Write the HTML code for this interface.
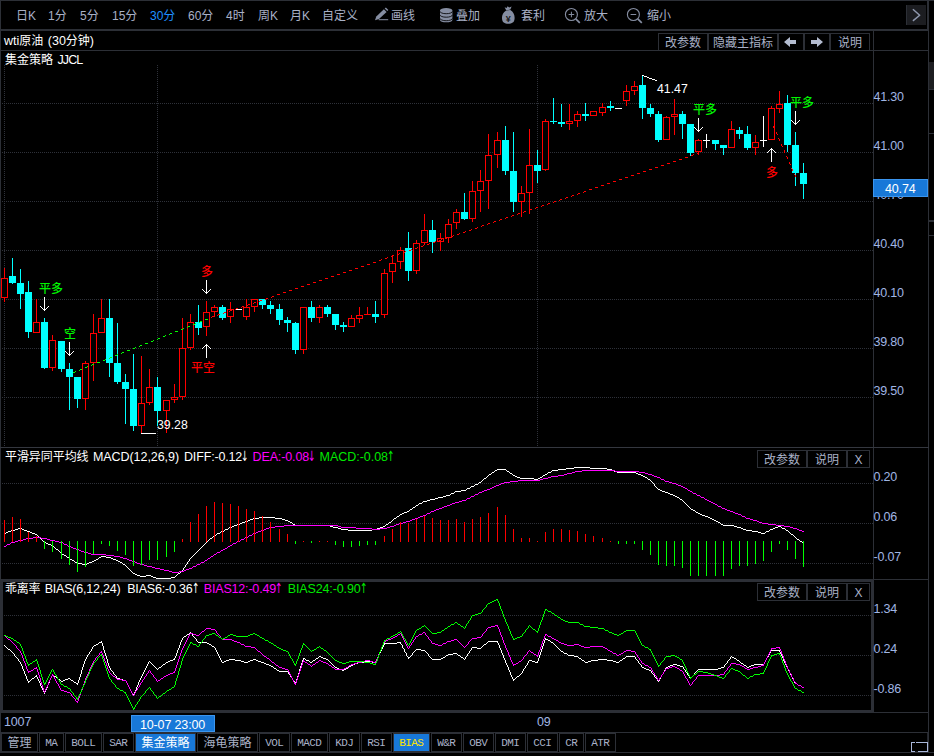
<!DOCTYPE html><html><head><meta charset="utf-8"><title>wti</title><style>
html,body{margin:0;padding:0;background:#000}
#app{position:relative;width:934px;height:756px;overflow:hidden;background:#000;font-family:"Liberation Sans","Noto Sans CJK SC",sans-serif}
#app>div,#app>svg{position:absolute}
.t{white-space:nowrap;color:#fff;line-height:16px}
.tb{font-size:12px;font-weight:400;color:#a9b1c7;line-height:16px}
.tb.sel{color:#1e90ff}
.ya{word-spacing:1px;font-size:12.5px;line-height:18px;color:#fff}
.ax{letter-spacing:-0.15px;font-size:12.5px;line-height:16px;color:#a0b6e4}
.ar{font-family:"DejaVu Sans",sans-serif;font-size:14px;letter-spacing:0;display:inline-block;transform:scaleX(.65);transform-origin:0 50%;width:6px;line-height:14px;margin-left:-1px}
.btn{font-weight:400;box-sizing:border-box;border:1px solid #2c2f36;color:#a9b1c7;font-size:12px;text-align:center;white-space:nowrap}
.tab{font-weight:400;box-sizing:border-box;border:1px solid #2c2f36;color:#a9b1c7;font-size:12px;line-height:19px;text-align:center;white-space:nowrap;background:#000}
.tab.lat{font-family:"Liberation Mono",monospace;font-size:11px;letter-spacing:-0.6px;text-indent:-0.5px}
.tsel{background:#1878d8;color:#fff}
.tyel{color:#ffe400}
.cj{font-size:12px}
.sg{font-size:12px;line-height:12px;font-weight:500}
</style></head><body><div id="app">
<div style="left:0px;top:0px;width:934px;height:1px;background:#2c2f36;"></div>
<div style="left:0px;top:0px;width:1px;height:753px;background:#2c2f36;"></div>
<div style="left:928px;top:0px;width:1px;height:753px;background:#2c2f36;"></div>
<div style="left:0px;top:29px;width:929px;height:2px;background:#2c2f36;"></div>
<div style="left:0px;top:50px;width:929px;height:1px;background:#2c2f36;"></div>
<div style="left:873px;top:31px;width:1px;height:682px;background:#2c2f36;"></div>
<div style="left:0px;top:447px;width:929px;height:1px;background:#34373f;"></div>
<div style="left:0px;top:579px;width:874px;height:3px;background:#2c2f36;"></div>
<div style="left:874px;top:579px;width:55px;height:1px;background:#2c2f36;"></div>
<div style="left:0px;top:579px;width:3px;height:134px;background:#2c2f36;"></div>
<div style="left:871px;top:579px;width:3px;height:134px;background:#2c2f36;"></div>
<div style="left:0px;top:710px;width:874px;height:3px;background:#2c2f36;"></div>
<div style="left:874px;top:712px;width:55px;height:1px;background:#2c2f36;"></div>
<div style="left:0px;top:732px;width:929px;height:1px;background:#2c2f36;"></div>
<div style="left:0px;top:752px;width:934px;height:1px;background:#2c2f36;"></div>
<div style="left:929px;top:62px;width:5px;height:27px;background:#1d1e21;"></div>
<div style="left:929px;top:89px;width:5px;height:1px;background:#2c2f36;"></div>
<div style="left:929px;top:133px;width:5px;height:1px;background:#2c2f36;"></div>
<div style="left:929px;top:220px;width:5px;height:2px;background:#2c2f36;"></div>
<div style="left:929px;top:235px;width:5px;height:1px;background:#2c2f36;"></div>
<div class="t tb" style="left:16px;top:8px;">日K</div>
<div class="t tb" style="left:48px;top:8px;">1分</div>
<div class="t tb" style="left:80px;top:8px;">5分</div>
<div class="t tb" style="left:112px;top:8px;">15分</div>
<div class="t tb sel" style="left:150px;top:8px;">30分</div>
<div class="t tb" style="left:188px;top:8px;">60分</div>
<div class="t tb" style="left:226px;top:8px;">4时</div>
<div class="t tb" style="left:258px;top:8px;">周K</div>
<div class="t tb" style="left:290px;top:8px;">月K</div>
<div class="t tb" style="left:322px;top:8px;">自定义</div>
<div class="t tb" style="left:391px;top:8px;">画线</div>
<div class="t tb" style="left:456px;top:8px;">叠加</div>
<div class="t tb" style="left:521px;top:8px;">套利</div>
<div class="t tb" style="left:584px;top:8px;">放大</div>
<div class="t tb" style="left:647px;top:8px;">缩小</div>
<div style="left:906px;top:5px;width:20px;height:20px;background:#1c1d21;border-left:1px solid #2c2f36;box-sizing:border-box;"></div>
<svg style="left:906px;top:5px" width="20" height="20" viewBox="0 0 20 20"><path d="M6.9 4.2 L13.7 10.2 L6.9 15.9" fill="none" stroke="#8f98ae" stroke-width="1.5" stroke-linejoin="round"/></svg>
<div style="left:927px;top:0px;width:1px;height:31px;background:#2c2f36;"></div>
<svg style="left:374px;top:7px" width="16" height="16" viewBox="0 0 16 16"><g fill="#858da1"><path d="M2.3 9.4 L9.9 2.2 L12.6 4.9 L5.0 12.1 L1.0 13.2 Z"/><path d="M10.7 1.5 L11.9 0.4 L14.4 2.9 L13.3 4.1 Z"/><rect x="4.7" y="12.2" width="9.5" height="1"/></g></svg>
<svg style="left:439px;top:7px" width="16" height="17" viewBox="0 0 16 17"><path d="M1 3.3 A6.2 2.3 0 0 1 13.4 3.3 V13 A6.2 2.3 0 0 1 1 13 Z" fill="#858da1"/><g fill="none" stroke="#0a0a0c" stroke-width=".9"><path d="M1 4.4 A6.2 2.3 0 0 0 13.4 4.4"/><path d="M1 7.9 A6.2 2.3 0 0 0 13.4 7.9"/><path d="M1 11.4 A6.2 2.3 0 0 0 13.4 11.4"/></g></svg>
<svg style="left:500px;top:5px" width="17" height="20" viewBox="0 0 17 20"><g fill="#858da1"><path d="M4.6 2.2 L6.6 3 L7.6 1.2 L9.2 2.6 L11.6 1.6 L10.4 4.6 L6.2 5.2 Z"/><path d="M6.2 5.4 L10.3 5 C13.6 7 14.8 10 14.6 13.6 C14.4 17.6 12 18.8 8.3 18.8 C4.6 18.8 2.2 17.6 2 13.6 C1.8 10 3 7.2 6.2 5.4 Z"/></g><text x="8.3" y="16.6" font-size="9" font-weight="bold" text-anchor="middle" fill="#15161a" font-family="Liberation Sans, sans-serif">¥</text></svg>
<svg style="left:564px;top:7px" width="18" height="17" viewBox="0 0 18 17"><circle cx="7.4" cy="7.5" r="6" fill="none" stroke="#858da1" stroke-width="1.1"/><path d="M11.8 11.8 L15.8 15.8" stroke="#858da1" stroke-width="1.7"/><path d="M4.6 7.5 H10.2 M7.4 4.7 V10.3" stroke="#858da1" stroke-width="1"/></svg>
<svg style="left:626px;top:7px" width="18" height="17" viewBox="0 0 18 17"><circle cx="7.4" cy="7.5" r="6" fill="none" stroke="#858da1" stroke-width="1.1"/><path d="M11.8 11.8 L15.8 15.8" stroke="#858da1" stroke-width="1.7"/><path d="M4.6 7.5 H10.2" stroke="#858da1" stroke-width="1"/></svg>
<div class="t ya" style="left:4px;top:32px;">wti<span class="cj">原油</span> (30<span class="cj">分钟</span>)</div>
<div class="t ya" style="left:5px;top:51px;"><span class="cj">集金策略</span> <span style="letter-spacing:-0.9px">JJCL</span></div>
<div class="btn" style="left:658px;top:33px;width:50px;height:18px;line-height:19px">改参数</div>
<div class="btn" style="left:708px;top:33px;width:70px;height:18px;line-height:19px">隐藏主指标</div>
<div class="btn" style="left:778px;top:33px;width:26px;height:18px;line-height:19px"></div>
<div class="btn" style="left:804px;top:33px;width:26px;height:18px;line-height:19px"></div>
<div class="btn" style="left:830px;top:33px;width:40px;height:18px;line-height:19px">说明</div>
<svg style="left:0;top:0" width="934" height="60"><path d="M784 42 L790 37 L790 40 L796 40 L796 44 L790 44 L790 47 Z" fill="#b4bcd0"/></svg>
<svg style="left:0;top:0" width="934" height="60"><path d="M823 42 L817 37 L817 40 L811 40 L811 44 L817 44 L817 47 Z" fill="#b4bcd0"/></svg>
<div class="btn" style="left:757px;top:450px;width:50px;height:18px;line-height:19px">改参数</div>
<div class="btn" style="left:807px;top:450px;width:40px;height:18px;line-height:19px">说明</div>
<div class="btn" style="left:847px;top:450px;width:23px;height:18px;line-height:19px">X</div>
<div class="btn" style="left:757px;top:583px;width:50px;height:18px;line-height:19px">改参数</div>
<div class="btn" style="left:807px;top:583px;width:40px;height:18px;line-height:19px">说明</div>
<div class="btn" style="left:847px;top:583px;width:23px;height:18px;line-height:19px">X</div>
<div class="t ax" style="left:873.4px;top:89px;">41.30</div>
<div class="t ax" style="left:873.4px;top:138px;">41.00</div>
<div class="t ax" style="left:873.4px;top:187px;">40.70</div>
<div class="t ax" style="left:873.4px;top:236px;">40.40</div>
<div class="t ax" style="left:873.4px;top:285px;">40.10</div>
<div class="t ax" style="left:873.4px;top:334px;">39.80</div>
<div class="t ax" style="left:873.4px;top:383px;">39.50</div>
<div class="t ax" style="left:873.4px;top:469px;">0.20</div>
<div class="t ax" style="left:873.4px;top:509px;">0.06</div>
<div class="t ax" style="left:873.4px;top:549px;">-0.07</div>
<div class="t ax" style="left:873.4px;top:601px;">1.34</div>
<div class="t ax" style="left:873.4px;top:641px;">0.24</div>
<div class="t ax" style="left:873.4px;top:681px;">-0.86</div>
<div style="left:873px;top:179px;width:55px;height:18px;background:#1878d8;border:1px solid #3b95ee;box-sizing:border-box"></div>
<div class="t ax" style="left:885px;top:181px;color:#fff">40.74</div>
<div class="t ax" style="left:4px;top:714px;">1007</div>
<div class="t ax" style="left:537px;top:714px;">09</div>
<div style="left:131px;top:715px;width:84px;height:17px;background:#1878d8;border:1px solid #3b95ee;box-sizing:border-box"></div>
<div class="t ax" style="left:140px;top:717px;color:#fff">10-07 23:00</div>
<div id="m1" class="t ya" style="left:5px;top:448px;letter-spacing:-0.063px;"><span class="cj">平滑异同平均线</span> MACD(12,26,9)</div>
<div id="m2" class="t ya" style="left:184px;top:448px;letter-spacing:-0.159px;">DIFF:-0.12<span class="ar">↓</span></div>
<div id="m3" class="t ya" style="left:252.5px;top:448px;letter-spacing:-0.117px;color:#ff00ff">DEA:-0.08<span class="ar">↓</span></div>
<div id="m4" class="t ya" style="left:319.5px;top:448px;letter-spacing:-0.026px;color:#00e800">MACD:-0.08<span class="ar">↑</span></div>
<div id="b1" class="t ya" style="left:5px;top:580px;letter-spacing:-0.201px;"><span class="cj">乖离率</span> BIAS(6,12,24)</div>
<div id="b2" class="t ya" style="left:127.2px;top:580px;letter-spacing:-0.184px;">BIAS6:-0.36<span class="ar">↑</span></div>
<div id="b3" class="t ya" style="left:203.8px;top:580px;letter-spacing:-0.181px;color:#ff00ff">BIAS12:-0.49<span class="ar">↑</span></div>
<div id="b4" class="t ya" style="left:287.7px;top:580px;letter-spacing:-0.120px;color:#00e800">BIAS24:-0.90<span class="ar">↑</span></div>
<div class="tab" style="left:1px;top:733px;width:37px;height:19px">管理</div>
<div class="tab lat" style="left:39px;top:733px;width:25px;height:19px">MA</div>
<div class="tab lat" style="left:65px;top:733px;width:37px;height:19px">BOLL</div>
<div class="tab lat" style="left:103px;top:733px;width:31px;height:19px">SAR</div>
<div class="tab tsel" style="left:135px;top:733px;width:61px;height:19px">集金策略</div>
<div class="tab" style="left:197px;top:733px;width:61px;height:19px">海龟策略</div>
<div class="tab lat" style="left:259px;top:733px;width:31px;height:19px">VOL</div>
<div class="tab lat" style="left:291px;top:733px;width:37px;height:19px">MACD</div>
<div class="tab lat" style="left:329px;top:733px;width:31px;height:19px">KDJ</div>
<div class="tab lat" style="left:361px;top:733px;width:31px;height:19px">RSI</div>
<div class="tab tsel tyel lat" style="left:393px;top:733px;width:37px;height:19px">BIAS</div>
<div class="tab lat" style="left:431px;top:733px;width:31px;height:19px">W&amp;R</div>
<div class="tab lat" style="left:463px;top:733px;width:31px;height:19px">OBV</div>
<div class="tab lat" style="left:495px;top:733px;width:31px;height:19px">DMI</div>
<div class="tab lat" style="left:527px;top:733px;width:31px;height:19px">CCI</div>
<div class="tab lat" style="left:559px;top:733px;width:25px;height:19px">CR</div>
<div class="tab lat" style="left:585px;top:733px;width:31px;height:19px">ATR</div>
<div style="left:911px;top:742px;width:17px;height:10px;border:1px solid #a9b7da;box-sizing:border-box"></div>
<div style="left:915px;top:742px;width:1px;height:1px;background:#000;"></div>
<div style="left:915px;top:751px;width:3px;height:1px;background:#16171a;"></div>
<div style="left:927px;top:733px;width:1px;height:9px;background:#24262c;"></div>
<svg style="left:0;top:0" width="934" height="756" viewBox="0 0 934 756" shape-rendering="crispEdges">
<line x1="2" y1="103.5" x2="873" y2="103.5" stroke="#2e3139" stroke-width="1" stroke-dasharray="1 1"/>
<line x1="2" y1="152.5" x2="873" y2="152.5" stroke="#2e3139" stroke-width="1" stroke-dasharray="1 1"/>
<line x1="2" y1="201.5" x2="873" y2="201.5" stroke="#2e3139" stroke-width="1" stroke-dasharray="1 1"/>
<line x1="2" y1="250.5" x2="873" y2="250.5" stroke="#2e3139" stroke-width="1" stroke-dasharray="1 1"/>
<line x1="2" y1="299.5" x2="873" y2="299.5" stroke="#2e3139" stroke-width="1" stroke-dasharray="1 1"/>
<line x1="2" y1="348.5" x2="873" y2="348.5" stroke="#2e3139" stroke-width="1" stroke-dasharray="1 1"/>
<line x1="2" y1="397.5" x2="873" y2="397.5" stroke="#2e3139" stroke-width="1" stroke-dasharray="1 1"/>
<line x1="2" y1="483.5" x2="873" y2="483.5" stroke="#2e3139" stroke-width="1" stroke-dasharray="1 1"/>
<line x1="2" y1="523.5" x2="873" y2="523.5" stroke="#2e3139" stroke-width="1" stroke-dasharray="1 1"/>
<line x1="2" y1="563.5" x2="873" y2="563.5" stroke="#2e3139" stroke-width="1" stroke-dasharray="1 1"/>
<line x1="4" y1="615.5" x2="871" y2="615.5" stroke="#2e3139" stroke-width="1" stroke-dasharray="1 1"/>
<line x1="4" y1="655.5" x2="871" y2="655.5" stroke="#2e3139" stroke-width="1" stroke-dasharray="1 1"/>
<line x1="4" y1="695.5" x2="871" y2="695.5" stroke="#2e3139" stroke-width="1" stroke-dasharray="1 1"/>
<line x1="4.5" y1="65" x2="4.5" y2="447" stroke="#2e3139" stroke-width="1" stroke-dasharray="1 1"/>
<line x1="157.5" y1="65" x2="157.5" y2="447" stroke="#2e3139" stroke-width="1" stroke-dasharray="1 1"/>
<line x1="537.5" y1="65" x2="537.5" y2="447" stroke="#2e3139" stroke-width="1" stroke-dasharray="1 1"/>
<rect x="4" y="268" width="1" height="34" fill="#ff0000"/>
<rect x="2" y="279" width="5" height="18" fill="#000"/>
<rect x="1.5" y="278.5" width="6" height="19" fill="none" stroke="#ff0000" stroke-width="1"/>
<rect x="12" y="258" width="1" height="26" fill="#00ffff"/>
<rect x="9" y="276" width="7" height="7" fill="#00ffff"/>
<rect x="20" y="269" width="1" height="40" fill="#00ffff"/>
<rect x="17" y="283" width="7" height="11" fill="#00ffff"/>
<rect x="28" y="281" width="1" height="57" fill="#00ffff"/>
<rect x="25" y="292" width="7" height="40" fill="#00ffff"/>
<rect x="36" y="299" width="1" height="34" fill="#ff0000"/>
<rect x="34" y="323" width="5" height="9" fill="#000"/>
<rect x="33.5" y="322.5" width="6" height="10" fill="none" stroke="#ff0000" stroke-width="1"/>
<rect x="44" y="318" width="1" height="51" fill="#00ffff"/>
<rect x="41" y="322" width="7" height="46" fill="#00ffff"/>
<rect x="52" y="335" width="1" height="36" fill="#ff0000"/>
<rect x="50" y="341" width="5" height="26" fill="#000"/>
<rect x="49.5" y="340.5" width="6" height="27" fill="none" stroke="#ff0000" stroke-width="1"/>
<rect x="61" y="341" width="1" height="31" fill="#00ffff"/>
<rect x="58" y="341" width="7" height="28" fill="#00ffff"/>
<rect x="69" y="363" width="1" height="47" fill="#00ffff"/>
<rect x="66" y="369" width="7" height="8" fill="#00ffff"/>
<rect x="77" y="377" width="1" height="31" fill="#00ffff"/>
<rect x="74" y="377" width="7" height="22" fill="#00ffff"/>
<rect x="85" y="361" width="1" height="49" fill="#ff0000"/>
<rect x="83" y="364" width="5" height="34" fill="#000"/>
<rect x="82.5" y="363.5" width="6" height="35" fill="none" stroke="#ff0000" stroke-width="1"/>
<rect x="93" y="314" width="1" height="67" fill="#ff0000"/>
<rect x="91" y="334" width="5" height="28" fill="#000"/>
<rect x="90.5" y="333.5" width="6" height="29" fill="none" stroke="#ff0000" stroke-width="1"/>
<rect x="101" y="299" width="1" height="34" fill="#ff0000"/>
<rect x="99" y="319" width="5" height="13" fill="#000"/>
<rect x="98.5" y="318.5" width="6" height="14" fill="none" stroke="#ff0000" stroke-width="1"/>
<rect x="109" y="299" width="1" height="78" fill="#00ffff"/>
<rect x="106" y="318" width="7" height="45" fill="#00ffff"/>
<rect x="117" y="323" width="1" height="61" fill="#00ffff"/>
<rect x="114" y="363" width="7" height="19" fill="#00ffff"/>
<rect x="125" y="374" width="1" height="50" fill="#00ffff"/>
<rect x="122" y="382" width="7" height="7" fill="#00ffff"/>
<rect x="133" y="354" width="1" height="77" fill="#00ffff"/>
<rect x="130" y="389" width="7" height="37" fill="#00ffff"/>
<rect x="141" y="356" width="1" height="77" fill="#ff0000"/>
<rect x="139" y="404" width="5" height="21" fill="#000"/>
<rect x="138.5" y="403.5" width="6" height="22" fill="none" stroke="#ff0000" stroke-width="1"/>
<rect x="149" y="369" width="1" height="36" fill="#ff0000"/>
<rect x="147" y="388" width="5" height="14" fill="#000"/>
<rect x="146.5" y="387.5" width="6" height="15" fill="none" stroke="#ff0000" stroke-width="1"/>
<rect x="157" y="377" width="1" height="49" fill="#00ffff"/>
<rect x="154" y="387" width="7" height="24" fill="#00ffff"/>
<rect x="166" y="400" width="1" height="33" fill="#ff0000"/>
<rect x="164" y="401" width="5" height="9" fill="#000"/>
<rect x="163.5" y="400.5" width="6" height="10" fill="none" stroke="#ff0000" stroke-width="1"/>
<rect x="174" y="384" width="1" height="19" fill="#ff0000"/>
<rect x="172" y="398" width="5" height="1" fill="#000"/>
<rect x="171.5" y="397.5" width="6" height="2" fill="none" stroke="#ff0000" stroke-width="1"/>
<rect x="182" y="318" width="1" height="82" fill="#ff0000"/>
<rect x="180" y="349" width="5" height="47" fill="#000"/>
<rect x="179.5" y="348.5" width="6" height="48" fill="none" stroke="#ff0000" stroke-width="1"/>
<rect x="190" y="314" width="1" height="36" fill="#ff0000"/>
<rect x="188" y="323" width="5" height="24" fill="#000"/>
<rect x="187.5" y="322.5" width="6" height="25" fill="none" stroke="#ff0000" stroke-width="1"/>
<rect x="198" y="305" width="1" height="30" fill="#00ffff"/>
<rect x="195" y="322" width="7" height="6" fill="#00ffff"/>
<rect x="206" y="301" width="1" height="35" fill="#ff0000"/>
<rect x="204" y="313" width="5" height="13" fill="#000"/>
<rect x="203.5" y="312.5" width="6" height="14" fill="none" stroke="#ff0000" stroke-width="1"/>
<rect x="214" y="305" width="1" height="12" fill="#ff0000"/>
<rect x="212" y="308" width="5" height="3" fill="#000"/>
<rect x="211.5" y="307.5" width="6" height="4" fill="none" stroke="#ff0000" stroke-width="1"/>
<rect x="222" y="305" width="1" height="15" fill="#00ffff"/>
<rect x="219" y="307" width="7" height="11" fill="#00ffff"/>
<rect x="230" y="302" width="1" height="21" fill="#ff0000"/>
<rect x="228" y="310" width="5" height="6" fill="#000"/>
<rect x="227.5" y="309.5" width="6" height="7" fill="none" stroke="#ff0000" stroke-width="1"/>
<rect x="238" y="309" width="1" height="1" fill="#ffffff"/>
<rect x="235" y="309" width="7" height="1" fill="#ffffff"/>
<rect x="246" y="299" width="1" height="21" fill="#ff0000"/>
<rect x="244" y="308" width="5" height="8" fill="#000"/>
<rect x="243.5" y="307.5" width="6" height="9" fill="none" stroke="#ff0000" stroke-width="1"/>
<rect x="254" y="299" width="1" height="13" fill="#ff0000"/>
<rect x="252" y="300" width="5" height="6" fill="#000"/>
<rect x="251.5" y="299.5" width="6" height="7" fill="none" stroke="#ff0000" stroke-width="1"/>
<rect x="262" y="299" width="1" height="10" fill="#00ffff"/>
<rect x="259" y="299" width="7" height="6" fill="#00ffff"/>
<rect x="270" y="301" width="1" height="13" fill="#00ffff"/>
<rect x="267" y="305" width="7" height="4" fill="#00ffff"/>
<rect x="279" y="304" width="1" height="21" fill="#00ffff"/>
<rect x="276" y="309" width="7" height="11" fill="#00ffff"/>
<rect x="287" y="317" width="1" height="15" fill="#00ffff"/>
<rect x="284" y="320" width="7" height="3" fill="#00ffff"/>
<rect x="295" y="322" width="1" height="32" fill="#00ffff"/>
<rect x="292" y="323" width="7" height="27" fill="#00ffff"/>
<rect x="303" y="307" width="1" height="47" fill="#ff0000"/>
<rect x="301" y="308" width="5" height="41" fill="#000"/>
<rect x="300.5" y="307.5" width="6" height="42" fill="none" stroke="#ff0000" stroke-width="1"/>
<rect x="311" y="301" width="1" height="21" fill="#00ffff"/>
<rect x="308" y="307" width="7" height="11" fill="#00ffff"/>
<rect x="319" y="305" width="1" height="18" fill="#ff0000"/>
<rect x="317" y="308" width="5" height="9" fill="#000"/>
<rect x="316.5" y="307.5" width="6" height="10" fill="none" stroke="#ff0000" stroke-width="1"/>
<rect x="327" y="305" width="1" height="12" fill="#00ffff"/>
<rect x="324" y="307" width="7" height="7" fill="#00ffff"/>
<rect x="335" y="314" width="1" height="16" fill="#00ffff"/>
<rect x="332" y="314" width="7" height="11" fill="#00ffff"/>
<rect x="343" y="322" width="1" height="10" fill="#00ffff"/>
<rect x="340" y="325" width="7" height="2" fill="#00ffff"/>
<rect x="351" y="315" width="1" height="12" fill="#ff0000"/>
<rect x="349" y="319" width="5" height="7" fill="#000"/>
<rect x="348.5" y="318.5" width="6" height="8" fill="none" stroke="#ff0000" stroke-width="1"/>
<rect x="359" y="307" width="1" height="16" fill="#ff0000"/>
<rect x="357" y="316" width="5" height="2" fill="#000"/>
<rect x="356.5" y="315.5" width="6" height="3" fill="none" stroke="#ff0000" stroke-width="1"/>
<rect x="367" y="307" width="1" height="8" fill="#ff0000"/>
<rect x="364" y="314" width="7" height="1" fill="#ff0000"/>
<rect x="375" y="301" width="1" height="22" fill="#00ffff"/>
<rect x="372" y="314" width="7" height="3" fill="#00ffff"/>
<rect x="384" y="269" width="1" height="49" fill="#ff0000"/>
<rect x="382" y="274" width="5" height="40" fill="#000"/>
<rect x="381.5" y="273.5" width="6" height="41" fill="none" stroke="#ff0000" stroke-width="1"/>
<rect x="392" y="255" width="1" height="28" fill="#ff0000"/>
<rect x="390" y="264" width="5" height="7" fill="#000"/>
<rect x="389.5" y="263.5" width="6" height="8" fill="none" stroke="#ff0000" stroke-width="1"/>
<rect x="400" y="247" width="1" height="22" fill="#ff0000"/>
<rect x="398" y="251" width="5" height="10" fill="#000"/>
<rect x="397.5" y="250.5" width="6" height="11" fill="none" stroke="#ff0000" stroke-width="1"/>
<rect x="408" y="232" width="1" height="49" fill="#00ffff"/>
<rect x="405" y="248" width="7" height="23" fill="#00ffff"/>
<rect x="416" y="240" width="1" height="34" fill="#ff0000"/>
<rect x="414" y="244" width="5" height="26" fill="#000"/>
<rect x="413.5" y="243.5" width="6" height="27" fill="none" stroke="#ff0000" stroke-width="1"/>
<rect x="424" y="214" width="1" height="31" fill="#ff0000"/>
<rect x="422" y="231" width="5" height="11" fill="#000"/>
<rect x="421.5" y="230.5" width="6" height="12" fill="none" stroke="#ff0000" stroke-width="1"/>
<rect x="432" y="220" width="1" height="33" fill="#00ffff"/>
<rect x="429" y="230" width="7" height="12" fill="#00ffff"/>
<rect x="440" y="233" width="1" height="18" fill="#ff0000"/>
<rect x="438" y="239" width="5" height="2" fill="#000"/>
<rect x="437.5" y="238.5" width="6" height="3" fill="none" stroke="#ff0000" stroke-width="1"/>
<rect x="448" y="219" width="1" height="24" fill="#ff0000"/>
<rect x="446" y="225" width="5" height="12" fill="#000"/>
<rect x="445.5" y="224.5" width="6" height="13" fill="none" stroke="#ff0000" stroke-width="1"/>
<rect x="456" y="209" width="1" height="20" fill="#ff0000"/>
<rect x="454" y="213" width="5" height="9" fill="#000"/>
<rect x="453.5" y="212.5" width="6" height="10" fill="none" stroke="#ff0000" stroke-width="1"/>
<rect x="464" y="193" width="1" height="27" fill="#00ffff"/>
<rect x="461" y="212" width="7" height="7" fill="#00ffff"/>
<rect x="472" y="181" width="1" height="41" fill="#ff0000"/>
<rect x="470" y="192" width="5" height="26" fill="#000"/>
<rect x="469.5" y="191.5" width="6" height="27" fill="none" stroke="#ff0000" stroke-width="1"/>
<rect x="480" y="170" width="1" height="42" fill="#ff0000"/>
<rect x="478" y="182" width="5" height="8" fill="#000"/>
<rect x="477.5" y="181.5" width="6" height="9" fill="none" stroke="#ff0000" stroke-width="1"/>
<rect x="488" y="134" width="1" height="75" fill="#ff0000"/>
<rect x="486" y="156" width="5" height="24" fill="#000"/>
<rect x="485.5" y="155.5" width="6" height="25" fill="none" stroke="#ff0000" stroke-width="1"/>
<rect x="497" y="132" width="1" height="36" fill="#ff0000"/>
<rect x="495" y="141" width="5" height="13" fill="#000"/>
<rect x="494.5" y="140.5" width="6" height="14" fill="none" stroke="#ff0000" stroke-width="1"/>
<rect x="505" y="126" width="1" height="49" fill="#00ffff"/>
<rect x="502" y="140" width="7" height="31" fill="#00ffff"/>
<rect x="513" y="132" width="1" height="80" fill="#00ffff"/>
<rect x="510" y="171" width="7" height="31" fill="#00ffff"/>
<rect x="521" y="186" width="1" height="31" fill="#ff0000"/>
<rect x="519" y="194" width="5" height="7" fill="#000"/>
<rect x="518.5" y="193.5" width="6" height="8" fill="none" stroke="#ff0000" stroke-width="1"/>
<rect x="529" y="129" width="1" height="85" fill="#ff0000"/>
<rect x="527" y="166" width="5" height="26" fill="#000"/>
<rect x="526.5" y="165.5" width="6" height="27" fill="none" stroke="#ff0000" stroke-width="1"/>
<rect x="537" y="150" width="1" height="33" fill="#00ffff"/>
<rect x="534" y="165" width="7" height="6" fill="#00ffff"/>
<rect x="545" y="119" width="1" height="52" fill="#ff0000"/>
<rect x="543" y="122" width="5" height="47" fill="#000"/>
<rect x="542.5" y="121.5" width="6" height="48" fill="none" stroke="#ff0000" stroke-width="1"/>
<rect x="553" y="98" width="1" height="26" fill="#00ffff"/>
<rect x="550" y="121" width="7" height="1" fill="#00ffff"/>
<rect x="561" y="104" width="1" height="23" fill="#00ffff"/>
<rect x="558" y="122" width="7" height="2" fill="#00ffff"/>
<rect x="569" y="104" width="1" height="26" fill="#ff0000"/>
<rect x="567" y="122" width="5" height="1" fill="#000"/>
<rect x="566.5" y="121.5" width="6" height="2" fill="none" stroke="#ff0000" stroke-width="1"/>
<rect x="577" y="111" width="1" height="16" fill="#ff0000"/>
<rect x="575" y="115" width="5" height="5" fill="#000"/>
<rect x="574.5" y="114.5" width="6" height="6" fill="none" stroke="#ff0000" stroke-width="1"/>
<rect x="585" y="103" width="1" height="18" fill="#00ffff"/>
<rect x="582" y="114" width="7" height="2" fill="#00ffff"/>
<rect x="593" y="111" width="1" height="5" fill="#ff0000"/>
<rect x="591" y="112" width="5" height="3" fill="#000"/>
<rect x="590.5" y="111.5" width="6" height="4" fill="none" stroke="#ff0000" stroke-width="1"/>
<rect x="602" y="103" width="1" height="13" fill="#ff0000"/>
<rect x="600" y="108" width="5" height="4" fill="#000"/>
<rect x="599.5" y="107.5" width="6" height="5" fill="none" stroke="#ff0000" stroke-width="1"/>
<rect x="610" y="101" width="1" height="10" fill="#00ffff"/>
<rect x="607" y="106" width="7" height="2" fill="#00ffff"/>
<rect x="618" y="108" width="1" height="1" fill="#ffffff"/>
<rect x="615" y="108" width="7" height="1" fill="#ffffff"/>
<rect x="626" y="85" width="1" height="21" fill="#ff0000"/>
<rect x="624" y="92" width="5" height="8" fill="#000"/>
<rect x="623.5" y="91.5" width="6" height="9" fill="none" stroke="#ff0000" stroke-width="1"/>
<rect x="634" y="81" width="1" height="14" fill="#ff0000"/>
<rect x="632" y="87" width="5" height="3" fill="#000"/>
<rect x="631.5" y="86.5" width="6" height="4" fill="none" stroke="#ff0000" stroke-width="1"/>
<rect x="642" y="75" width="1" height="44" fill="#00ffff"/>
<rect x="639" y="85" width="7" height="23" fill="#00ffff"/>
<rect x="650" y="104" width="1" height="13" fill="#00ffff"/>
<rect x="647" y="108" width="7" height="6" fill="#00ffff"/>
<rect x="658" y="111" width="1" height="31" fill="#00ffff"/>
<rect x="655" y="114" width="7" height="26" fill="#00ffff"/>
<rect x="666" y="116" width="1" height="24" fill="#ff0000"/>
<rect x="664" y="118" width="5" height="21" fill="#000"/>
<rect x="663.5" y="117.5" width="6" height="22" fill="none" stroke="#ff0000" stroke-width="1"/>
<rect x="674" y="99" width="1" height="36" fill="#ff0000"/>
<rect x="672" y="115" width="5" height="1" fill="#000"/>
<rect x="671.5" y="114.5" width="6" height="2" fill="none" stroke="#ff0000" stroke-width="1"/>
<rect x="682" y="111" width="1" height="28" fill="#00ffff"/>
<rect x="679" y="114" width="7" height="10" fill="#00ffff"/>
<rect x="690" y="124" width="1" height="32" fill="#00ffff"/>
<rect x="687" y="124" width="7" height="29" fill="#00ffff"/>
<rect x="698" y="139" width="1" height="16" fill="#ff0000"/>
<rect x="696" y="141" width="5" height="10" fill="#000"/>
<rect x="695.5" y="140.5" width="6" height="11" fill="none" stroke="#ff0000" stroke-width="1"/>
<rect x="706" y="134" width="1" height="14" fill="#ffffff"/>
<rect x="703" y="140" width="7" height="1" fill="#ffffff"/>
<rect x="715" y="140" width="1" height="10" fill="#00ffff"/>
<rect x="712" y="140" width="7" height="4" fill="#00ffff"/>
<rect x="723" y="145" width="1" height="10" fill="#00ffff"/>
<rect x="720" y="145" width="7" height="3" fill="#00ffff"/>
<rect x="731" y="121" width="1" height="27" fill="#ff0000"/>
<rect x="729" y="130" width="5" height="17" fill="#000"/>
<rect x="728.5" y="129.5" width="6" height="18" fill="none" stroke="#ff0000" stroke-width="1"/>
<rect x="739" y="127" width="1" height="12" fill="#00ffff"/>
<rect x="736" y="130" width="7" height="4" fill="#00ffff"/>
<rect x="747" y="126" width="1" height="24" fill="#00ffff"/>
<rect x="744" y="134" width="7" height="14" fill="#00ffff"/>
<rect x="755" y="135" width="1" height="20" fill="#ff0000"/>
<rect x="753" y="143" width="5" height="4" fill="#000"/>
<rect x="752.5" y="142.5" width="6" height="5" fill="none" stroke="#ff0000" stroke-width="1"/>
<rect x="763" y="116" width="1" height="31" fill="#ffffff"/>
<rect x="760" y="140" width="7" height="1" fill="#ffffff"/>
<rect x="771" y="106" width="1" height="34" fill="#ff0000"/>
<rect x="769" y="109" width="5" height="30" fill="#000"/>
<rect x="768.5" y="108.5" width="6" height="31" fill="none" stroke="#ff0000" stroke-width="1"/>
<rect x="779" y="91" width="1" height="22" fill="#ff0000"/>
<rect x="777" y="105" width="5" height="3" fill="#000"/>
<rect x="776.5" y="104.5" width="6" height="4" fill="none" stroke="#ff0000" stroke-width="1"/>
<rect x="787" y="95" width="1" height="57" fill="#00ffff"/>
<rect x="784" y="103" width="7" height="42" fill="#00ffff"/>
<rect x="795" y="132" width="1" height="54" fill="#00ffff"/>
<rect x="792" y="145" width="7" height="28" fill="#00ffff"/>
<rect x="803" y="163" width="1" height="36" fill="#00ffff"/>
<rect x="800" y="173" width="7" height="11" fill="#00ffff"/>
<rect x="73" y="372" width="2" height="1" fill="#00ff00"/>
<rect x="75" y="371" width="1" height="1" fill="#00ff00"/>
<rect x="79" y="370" width="1" height="1" fill="#00ff00"/>
<rect x="80" y="369" width="2" height="1" fill="#00ff00"/>
<rect x="85" y="367" width="2" height="1" fill="#00ff00"/>
<rect x="87" y="366" width="1" height="1" fill="#00ff00"/>
<rect x="91" y="365" width="1" height="1" fill="#00ff00"/>
<rect x="92" y="364" width="2" height="1" fill="#00ff00"/>
<rect x="97" y="362" width="3" height="1" fill="#00ff00"/>
<rect x="103" y="360" width="2" height="1" fill="#00ff00"/>
<rect x="105" y="359" width="1" height="1" fill="#00ff00"/>
<rect x="109" y="358" width="1" height="1" fill="#00ff00"/>
<rect x="110" y="357" width="2" height="1" fill="#00ff00"/>
<rect x="115" y="355" width="2" height="1" fill="#00ff00"/>
<rect x="117" y="354" width="1" height="1" fill="#00ff00"/>
<rect x="121" y="353" width="1" height="1" fill="#00ff00"/>
<rect x="122" y="352" width="2" height="1" fill="#00ff00"/>
<rect x="127" y="350" width="3" height="1" fill="#00ff00"/>
<rect x="133" y="348" width="2" height="1" fill="#00ff00"/>
<rect x="135" y="347" width="1" height="1" fill="#00ff00"/>
<rect x="139" y="346" width="1" height="1" fill="#00ff00"/>
<rect x="140" y="345" width="2" height="1" fill="#00ff00"/>
<rect x="145" y="343" width="3" height="1" fill="#00ff00"/>
<rect x="151" y="341" width="2" height="1" fill="#00ff00"/>
<rect x="153" y="340" width="1" height="1" fill="#00ff00"/>
<rect x="157" y="339" width="1" height="1" fill="#00ff00"/>
<rect x="158" y="338" width="2" height="1" fill="#00ff00"/>
<rect x="163" y="336" width="2" height="1" fill="#00ff00"/>
<rect x="165" y="335" width="1" height="1" fill="#00ff00"/>
<rect x="169" y="334" width="1" height="1" fill="#00ff00"/>
<rect x="170" y="333" width="2" height="1" fill="#00ff00"/>
<rect x="175" y="331" width="3" height="1" fill="#00ff00"/>
<rect x="181" y="329" width="2" height="1" fill="#00ff00"/>
<rect x="183" y="328" width="1" height="1" fill="#00ff00"/>
<rect x="187" y="327" width="1" height="1" fill="#00ff00"/>
<rect x="188" y="326" width="2" height="1" fill="#00ff00"/>
<rect x="193" y="324" width="2" height="1" fill="#00ff00"/>
<rect x="195" y="323" width="1" height="1" fill="#00ff00"/>
<rect x="199" y="322" width="1" height="1" fill="#00ff00"/>
<rect x="200" y="321" width="2" height="1" fill="#00ff00"/>
<rect x="205" y="319" width="3" height="1" fill="#00ff00"/>
<rect x="211" y="317" width="1" height="1" fill="#ff0000"/>
<rect x="212" y="316" width="2" height="1" fill="#ff0000"/>
<rect x="217" y="315" width="1" height="1" fill="#ff0000"/>
<rect x="218" y="314" width="2" height="1" fill="#ff0000"/>
<rect x="223" y="313" width="1" height="1" fill="#ff0000"/>
<rect x="224" y="312" width="2" height="1" fill="#ff0000"/>
<rect x="229" y="311" width="1" height="1" fill="#ff0000"/>
<rect x="230" y="310" width="2" height="1" fill="#ff0000"/>
<rect x="235" y="309" width="1" height="1" fill="#ff0000"/>
<rect x="236" y="308" width="2" height="1" fill="#ff0000"/>
<rect x="241" y="307" width="1" height="1" fill="#ff0000"/>
<rect x="242" y="306" width="2" height="1" fill="#ff0000"/>
<rect x="247" y="305" width="1" height="1" fill="#ff0000"/>
<rect x="248" y="304" width="2" height="1" fill="#ff0000"/>
<rect x="253" y="303" width="1" height="1" fill="#ff0000"/>
<rect x="254" y="302" width="2" height="1" fill="#ff0000"/>
<rect x="259" y="301" width="1" height="1" fill="#ff0000"/>
<rect x="260" y="300" width="2" height="1" fill="#ff0000"/>
<rect x="265" y="299" width="1" height="1" fill="#ff0000"/>
<rect x="266" y="298" width="2" height="1" fill="#ff0000"/>
<rect x="271" y="297" width="1" height="1" fill="#ff0000"/>
<rect x="272" y="296" width="2" height="1" fill="#ff0000"/>
<rect x="277" y="294" width="3" height="1" fill="#ff0000"/>
<rect x="283" y="292" width="3" height="1" fill="#ff0000"/>
<rect x="289" y="290" width="3" height="1" fill="#ff0000"/>
<rect x="295" y="288" width="3" height="1" fill="#ff0000"/>
<rect x="301" y="286" width="3" height="1" fill="#ff0000"/>
<rect x="307" y="284" width="3" height="1" fill="#ff0000"/>
<rect x="313" y="282" width="3" height="1" fill="#ff0000"/>
<rect x="319" y="280" width="3" height="1" fill="#ff0000"/>
<rect x="325" y="278" width="3" height="1" fill="#ff0000"/>
<rect x="331" y="276" width="3" height="1" fill="#ff0000"/>
<rect x="337" y="274" width="3" height="1" fill="#ff0000"/>
<rect x="343" y="272" width="3" height="1" fill="#ff0000"/>
<rect x="349" y="270" width="3" height="1" fill="#ff0000"/>
<rect x="355" y="268" width="3" height="1" fill="#ff0000"/>
<rect x="361" y="266" width="3" height="1" fill="#ff0000"/>
<rect x="367" y="264" width="3" height="1" fill="#ff0000"/>
<rect x="373" y="262" width="3" height="1" fill="#ff0000"/>
<rect x="379" y="260" width="2" height="1" fill="#ff0000"/>
<rect x="381" y="259" width="1" height="1" fill="#ff0000"/>
<rect x="385" y="258" width="2" height="1" fill="#ff0000"/>
<rect x="387" y="257" width="1" height="1" fill="#ff0000"/>
<rect x="391" y="256" width="2" height="1" fill="#ff0000"/>
<rect x="393" y="255" width="1" height="1" fill="#ff0000"/>
<rect x="397" y="254" width="2" height="1" fill="#ff0000"/>
<rect x="399" y="253" width="1" height="1" fill="#ff0000"/>
<rect x="403" y="252" width="2" height="1" fill="#ff0000"/>
<rect x="405" y="251" width="1" height="1" fill="#ff0000"/>
<rect x="409" y="250" width="2" height="1" fill="#ff0000"/>
<rect x="411" y="249" width="1" height="1" fill="#ff0000"/>
<rect x="415" y="248" width="2" height="1" fill="#ff0000"/>
<rect x="417" y="247" width="1" height="1" fill="#ff0000"/>
<rect x="421" y="246" width="2" height="1" fill="#ff0000"/>
<rect x="423" y="245" width="1" height="1" fill="#ff0000"/>
<rect x="427" y="244" width="2" height="1" fill="#ff0000"/>
<rect x="429" y="243" width="1" height="1" fill="#ff0000"/>
<rect x="433" y="242" width="2" height="1" fill="#ff0000"/>
<rect x="435" y="241" width="1" height="1" fill="#ff0000"/>
<rect x="439" y="240" width="2" height="1" fill="#ff0000"/>
<rect x="441" y="239" width="1" height="1" fill="#ff0000"/>
<rect x="445" y="238" width="2" height="1" fill="#ff0000"/>
<rect x="447" y="237" width="1" height="1" fill="#ff0000"/>
<rect x="451" y="236" width="2" height="1" fill="#ff0000"/>
<rect x="453" y="235" width="1" height="1" fill="#ff0000"/>
<rect x="457" y="234" width="2" height="1" fill="#ff0000"/>
<rect x="459" y="233" width="1" height="1" fill="#ff0000"/>
<rect x="463" y="232" width="2" height="1" fill="#ff0000"/>
<rect x="465" y="231" width="1" height="1" fill="#ff0000"/>
<rect x="469" y="230" width="2" height="1" fill="#ff0000"/>
<rect x="471" y="229" width="1" height="1" fill="#ff0000"/>
<rect x="475" y="228" width="2" height="1" fill="#ff0000"/>
<rect x="477" y="227" width="1" height="1" fill="#ff0000"/>
<rect x="481" y="226" width="1" height="1" fill="#ff0000"/>
<rect x="482" y="225" width="2" height="1" fill="#ff0000"/>
<rect x="487" y="224" width="1" height="1" fill="#ff0000"/>
<rect x="488" y="223" width="2" height="1" fill="#ff0000"/>
<rect x="493" y="222" width="1" height="1" fill="#ff0000"/>
<rect x="494" y="221" width="2" height="1" fill="#ff0000"/>
<rect x="499" y="220" width="1" height="1" fill="#ff0000"/>
<rect x="500" y="219" width="2" height="1" fill="#ff0000"/>
<rect x="505" y="218" width="1" height="1" fill="#ff0000"/>
<rect x="506" y="217" width="2" height="1" fill="#ff0000"/>
<rect x="511" y="216" width="1" height="1" fill="#ff0000"/>
<rect x="512" y="215" width="2" height="1" fill="#ff0000"/>
<rect x="517" y="214" width="1" height="1" fill="#ff0000"/>
<rect x="518" y="213" width="2" height="1" fill="#ff0000"/>
<rect x="523" y="212" width="1" height="1" fill="#ff0000"/>
<rect x="524" y="211" width="2" height="1" fill="#ff0000"/>
<rect x="529" y="210" width="1" height="1" fill="#ff0000"/>
<rect x="530" y="209" width="2" height="1" fill="#ff0000"/>
<rect x="535" y="208" width="1" height="1" fill="#ff0000"/>
<rect x="536" y="207" width="2" height="1" fill="#ff0000"/>
<rect x="541" y="206" width="1" height="1" fill="#ff0000"/>
<rect x="542" y="205" width="2" height="1" fill="#ff0000"/>
<rect x="547" y="204" width="1" height="1" fill="#ff0000"/>
<rect x="548" y="203" width="2" height="1" fill="#ff0000"/>
<rect x="553" y="202" width="1" height="1" fill="#ff0000"/>
<rect x="554" y="201" width="2" height="1" fill="#ff0000"/>
<rect x="559" y="200" width="1" height="1" fill="#ff0000"/>
<rect x="560" y="199" width="2" height="1" fill="#ff0000"/>
<rect x="565" y="198" width="1" height="1" fill="#ff0000"/>
<rect x="566" y="197" width="2" height="1" fill="#ff0000"/>
<rect x="571" y="196" width="1" height="1" fill="#ff0000"/>
<rect x="572" y="195" width="2" height="1" fill="#ff0000"/>
<rect x="577" y="194" width="1" height="1" fill="#ff0000"/>
<rect x="578" y="193" width="2" height="1" fill="#ff0000"/>
<rect x="583" y="192" width="1" height="1" fill="#ff0000"/>
<rect x="584" y="191" width="2" height="1" fill="#ff0000"/>
<rect x="589" y="189" width="3" height="1" fill="#ff0000"/>
<rect x="595" y="187" width="3" height="1" fill="#ff0000"/>
<rect x="601" y="185" width="3" height="1" fill="#ff0000"/>
<rect x="607" y="183" width="3" height="1" fill="#ff0000"/>
<rect x="613" y="181" width="3" height="1" fill="#ff0000"/>
<rect x="619" y="179" width="3" height="1" fill="#ff0000"/>
<rect x="625" y="177" width="3" height="1" fill="#ff0000"/>
<rect x="631" y="175" width="3" height="1" fill="#ff0000"/>
<rect x="637" y="173" width="3" height="1" fill="#ff0000"/>
<rect x="643" y="171" width="3" height="1" fill="#ff0000"/>
<rect x="649" y="169" width="3" height="1" fill="#ff0000"/>
<rect x="655" y="167" width="3" height="1" fill="#ff0000"/>
<rect x="661" y="165" width="3" height="1" fill="#ff0000"/>
<rect x="667" y="163" width="3" height="1" fill="#ff0000"/>
<rect x="673" y="161" width="3" height="1" fill="#ff0000"/>
<rect x="679" y="159" width="3" height="1" fill="#ff0000"/>
<rect x="685" y="157" width="3" height="1" fill="#ff0000"/>
<rect x="691" y="155" width="2" height="1" fill="#ff0000"/>
<rect x="693" y="154" width="1" height="1" fill="#ff0000"/>
<rect x="697" y="153" width="2" height="1" fill="#ff0000"/>
<rect x="773" y="126" width="1" height="2" fill="#ff0000"/>
<rect x="774" y="128" width="1" height="1" fill="#ff0000"/>
<rect x="776" y="132" width="1" height="2" fill="#ff0000"/>
<rect x="777" y="134" width="1" height="1" fill="#ff0000"/>
<rect x="778" y="138" width="1" height="1" fill="#ff0000"/>
<rect x="779" y="139" width="1" height="2" fill="#ff0000"/>
<rect x="781" y="144" width="1" height="2" fill="#ff0000"/>
<rect x="782" y="146" width="1" height="1" fill="#ff0000"/>
<rect x="784" y="150" width="1" height="3" fill="#ff0000"/>
<rect x="786" y="156" width="1" height="1" fill="#ff0000"/>
<rect x="787" y="157" width="1" height="2" fill="#ff0000"/>
<rect x="789" y="162" width="1" height="2" fill="#ff0000"/>
<rect x="790" y="164" width="1" height="1" fill="#ff0000"/>
<rect x="791" y="168" width="1" height="1" fill="#ff0000"/>
<rect x="792" y="169" width="1" height="2" fill="#ff0000"/>
<rect x="794" y="174" width="1" height="1" fill="#ff0000"/>
<rect x="795" y="175" width="1" height="2" fill="#ff0000"/>
<rect x="642" y="75" width="2" height="1" fill="#fff"/>
<rect x="644" y="76" width="3" height="1" fill="#fff"/>
<rect x="647" y="77" width="2" height="1" fill="#fff"/>
<rect x="649" y="78" width="3" height="1" fill="#fff"/>
<rect x="652" y="79" width="3" height="1" fill="#fff"/>
<rect x="655" y="80" width="2" height="1" fill="#fff"/>
<rect x="141" y="433" width="15" height="1" fill="#fff"/>
<g shape-rendering="auto" stroke="#fff" stroke-width="1.25" fill="none">
</g>
<rect x="44" y="297" width="1" height="14" fill="#fff"/>
<rect x="43" y="309" width="1" height="1" fill="#fff"/><rect x="45" y="309" width="1" height="1" fill="#fff"/>
<rect x="42" y="308" width="1" height="1" fill="#fff"/><rect x="46" y="308" width="1" height="1" fill="#fff"/>
<rect x="41" y="307" width="1" height="1" fill="#fff"/><rect x="47" y="307" width="1" height="1" fill="#fff"/>
<rect x="40" y="306" width="1" height="1" fill="#fff"/><rect x="48" y="306" width="1" height="1" fill="#fff"/>
<rect x="69" y="342" width="1" height="14" fill="#fff"/>
<rect x="68" y="354" width="1" height="1" fill="#fff"/><rect x="70" y="354" width="1" height="1" fill="#fff"/>
<rect x="67" y="353" width="1" height="1" fill="#fff"/><rect x="71" y="353" width="1" height="1" fill="#fff"/>
<rect x="66" y="352" width="1" height="1" fill="#fff"/><rect x="72" y="352" width="1" height="1" fill="#fff"/>
<rect x="65" y="351" width="1" height="1" fill="#fff"/><rect x="73" y="351" width="1" height="1" fill="#fff"/>
<rect x="206" y="280" width="1" height="14" fill="#fff"/>
<rect x="205" y="292" width="1" height="1" fill="#fff"/><rect x="207" y="292" width="1" height="1" fill="#fff"/>
<rect x="204" y="291" width="1" height="1" fill="#fff"/><rect x="208" y="291" width="1" height="1" fill="#fff"/>
<rect x="203" y="290" width="1" height="1" fill="#fff"/><rect x="209" y="290" width="1" height="1" fill="#fff"/>
<rect x="202" y="289" width="1" height="1" fill="#fff"/><rect x="210" y="289" width="1" height="1" fill="#fff"/>
<rect x="206" y="344" width="1" height="14" fill="#fff"/>
<rect x="205" y="345" width="1" height="1" fill="#fff"/><rect x="207" y="345" width="1" height="1" fill="#fff"/>
<rect x="204" y="346" width="1" height="1" fill="#fff"/><rect x="208" y="346" width="1" height="1" fill="#fff"/>
<rect x="203" y="347" width="1" height="1" fill="#fff"/><rect x="209" y="347" width="1" height="1" fill="#fff"/>
<rect x="202" y="348" width="1" height="1" fill="#fff"/><rect x="210" y="348" width="1" height="1" fill="#fff"/>
<rect x="698" y="118" width="1" height="14" fill="#fff"/>
<rect x="697" y="130" width="1" height="1" fill="#fff"/><rect x="699" y="130" width="1" height="1" fill="#fff"/>
<rect x="696" y="129" width="1" height="1" fill="#fff"/><rect x="700" y="129" width="1" height="1" fill="#fff"/>
<rect x="695" y="128" width="1" height="1" fill="#fff"/><rect x="701" y="128" width="1" height="1" fill="#fff"/>
<rect x="694" y="127" width="1" height="1" fill="#fff"/><rect x="702" y="127" width="1" height="1" fill="#fff"/>
<rect x="771" y="148" width="1" height="14" fill="#fff"/>
<rect x="770" y="149" width="1" height="1" fill="#fff"/><rect x="772" y="149" width="1" height="1" fill="#fff"/>
<rect x="769" y="150" width="1" height="1" fill="#fff"/><rect x="773" y="150" width="1" height="1" fill="#fff"/>
<rect x="768" y="151" width="1" height="1" fill="#fff"/><rect x="774" y="151" width="1" height="1" fill="#fff"/>
<rect x="767" y="152" width="1" height="1" fill="#fff"/><rect x="775" y="152" width="1" height="1" fill="#fff"/>
<rect x="795" y="111" width="1" height="14" fill="#fff"/>
<rect x="794" y="123" width="1" height="1" fill="#fff"/><rect x="796" y="123" width="1" height="1" fill="#fff"/>
<rect x="793" y="122" width="1" height="1" fill="#fff"/><rect x="797" y="122" width="1" height="1" fill="#fff"/>
<rect x="792" y="121" width="1" height="1" fill="#fff"/><rect x="798" y="121" width="1" height="1" fill="#fff"/>
<rect x="791" y="120" width="1" height="1" fill="#fff"/><rect x="799" y="120" width="1" height="1" fill="#fff"/>
<path d="M4 533.5h2M6 532.5h2M8 531.5h3M11 530.5h4M15 529.5h3M18 528.5h4M22 529.5h2M24 530.5h3M27 531.5h3M30 532.5h2M32 533.5h3M35 534.5h2M37 535.5h1M38 536.5h1M39 537.5h1M40 538.5h1M41 539.5h1M42 540.5h1M43 541.5h1M44 542.5h2M46 543.5h2M48 544.5h3M51 545.5h2M53 546.5h1M54 547.5h1M55 548.5h1M56 549.5h2M58 550.5h1M59 551.5h1M60 552.5h1M61 553.5h1M62 554.5h2M64 555.5h2M66 556.5h1M67 557.5h2M69 558.5h1M70 559.5h2M72 560.5h2M74 561.5h1M75 562.5h2M77 563.5h5M82 564.5h5M87 563.5h2M89 562.5h3M92 561.5h2M94 560.5h2M96 559.5h2M98 558.5h1M99 557.5h2M101 556.5h5M106 557.5h5M111 558.5h2M113 559.5h3M116 560.5h2M118 561.5h2M120 562.5h2M122 563.5h1M123 564.5h2M125 565.5h1M126 566.5h1M127 567.5h1M128 568.5h1M129 569.5h1M130 570.5h1M131 571.5h1M132 572.5h1M133 573.5h2M135 574.5h2M137 575.5h3M140 576.5h6M146 575.5h5M151 576.5h2M153 577.5h3M156 578.5h15M171 577.5h4M175 576.5h1M176 575.5h1M177 574.5h1M178 573.5h2M180 572.5h1M181 571.5h1M182 570.5h1M183.5 568v2M184 567.5h1M185.5 565v2M186 564.5h1M187.5 562v2M188 561.5h1M189.5 559v2M190 558.5h1M191 557.5h1M192 556.5h1M193 555.5h1M194 554.5h1M195 553.5h1M196 552.5h1M197 551.5h1M198 550.5h1M199 549.5h1M200 548.5h1M201 547.5h1M202 546.5h1M203 545.5h1M204 544.5h1M205 543.5h1M206 542.5h1M207 541.5h1M208 540.5h1M209 539.5h1M210 538.5h2M212 537.5h1M213 536.5h1M214 535.5h2M216 534.5h1M217 533.5h3M220 532.5h1M221 531.5h3M224 530.5h1M225 529.5h3M228 528.5h1M229 527.5h3M232 526.5h2M234 525.5h3M237 524.5h3M240 523.5h2M242 522.5h3M245 521.5h3M248 520.5h2M250 519.5h3M253 518.5h6M259 517.5h16M275 518.5h7M282 519.5h3M285 520.5h3M288 521.5h2M290 522.5h2M292 523.5h1M293 524.5h2M295 525.5h35M330 526.5h3M333 527.5h5M338 528.5h3M341 529.5h7M348 530.5h24M372 529.5h5M377 528.5h3M380 527.5h3M383 526.5h2M385 525.5h1M386 524.5h2M388 523.5h1M389 522.5h2M391 521.5h1M392 520.5h1M393 519.5h1M394 518.5h2M396 517.5h1M397 516.5h2M399 515.5h1M400 514.5h2M402 513.5h2M404 512.5h3M407 511.5h2M409 510.5h1M410 509.5h2M412 508.5h1M413 507.5h2M415 506.5h1M416 505.5h2M418 504.5h1M419 503.5h3M422 502.5h1M423 501.5h4M427 500.5h3M430 499.5h5M435 498.5h3M438 497.5h5M443 496.5h3M446 495.5h4M450 494.5h1M451 493.5h3M454 492.5h1M455 491.5h6M461 490.5h5M466 489.5h1M467 488.5h3M470 487.5h1M471 486.5h3M474 485.5h1M475 484.5h3M478 483.5h1M479 482.5h2M481 481.5h1M482 480.5h1M483 479.5h1M484 478.5h2M486 477.5h1M487 476.5h1M488 475.5h1M489 474.5h2M491 473.5h1M492 472.5h2M494 471.5h1M495 470.5h2M497 469.5h9M506 470.5h1M507 471.5h2M509 472.5h1M510 473.5h2M512 474.5h1M513 475.5h2M515 476.5h2M517 477.5h3M520 478.5h14M534 479.5h4M538 478.5h2M540 477.5h2M542 476.5h1M543 475.5h2M545 474.5h2M547 473.5h1M548 472.5h3M551 471.5h1M552 470.5h6M558 469.5h8M566 468.5h8M574 467.5h16M590 468.5h17M607 469.5h5M612 470.5h2M614 471.5h3M617 472.5h19M636 473.5h2M638 474.5h3M641 475.5h2M643 476.5h2M645 477.5h2M647 478.5h1M648 479.5h2M650 480.5h1M651 481.5h1M652 482.5h1M653 483.5h1M654.5 484v2M655 486.5h1M656 487.5h1M657 488.5h1M658 489.5h2M660 490.5h2M662 491.5h3M665 492.5h3M668 493.5h2M670 494.5h3M673 495.5h2M675 496.5h2M677 497.5h2M679 498.5h1M680 499.5h2M682 500.5h1M683 501.5h1M684 502.5h1M685 503.5h1M686 504.5h1M687 505.5h1M688 506.5h1M689 507.5h1M690 508.5h1M691 509.5h2M693 510.5h2M695 511.5h1M696 512.5h2M698 513.5h2M700 514.5h2M702 515.5h3M705 516.5h3M708 517.5h2M710 518.5h2M712 519.5h2M714 520.5h2M716 521.5h2M718 522.5h2M720 523.5h1M721 524.5h2M723 525.5h11M734 526.5h3M737 527.5h4M741 528.5h2M743 529.5h3M746 530.5h6M752 531.5h6M758 532.5h3M761 533.5h4M765 532.5h1M766 531.5h3M769 530.5h1M770 529.5h3M773 528.5h2M775 527.5h3M778 526.5h3M781 527.5h1M782 528.5h3M785 529.5h1M786 530.5h2M788 531.5h1M789 532.5h1M790 533.5h1M791 534.5h2M793 535.5h1M794 536.5h1M795 537.5h1M796 538.5h1M797 539.5h2M799 540.5h1M800 541.5h2M802 542.5h1M803 543.5h1" fill="none" stroke="#ffffff" stroke-width="1"/>
<path d="M4 546.5h2M6 545.5h1M7 544.5h3M10 543.5h1M11 542.5h4M15 541.5h3M18 540.5h5M23 539.5h3M26 538.5h7M33 537.5h8M41 538.5h6M47 539.5h3M50 540.5h5M55 541.5h4M59 542.5h4M63 543.5h1M64 544.5h3M67 545.5h1M68 546.5h3M71 547.5h2M73 548.5h3M76 549.5h3M79 550.5h2M81 551.5h3M84 552.5h4M88 553.5h3M91 554.5h15M106 555.5h8M114 556.5h6M120 557.5h3M123 558.5h4M127 559.5h2M129 560.5h3M132 561.5h3M135 562.5h2M137 563.5h3M140 564.5h4M144 565.5h3M147 566.5h5M152 567.5h3M155 568.5h5M160 569.5h4M164 570.5h5M169 571.5h3M172 572.5h7M179 571.5h5M184 570.5h2M186 569.5h3M189 568.5h3M192 567.5h1M193 566.5h3M196 565.5h1M197 564.5h3M200 563.5h1M201 562.5h3M204 561.5h1M205 560.5h2M207 559.5h1M208 558.5h2M210 557.5h1M211 556.5h2M213 555.5h1M214 554.5h2M216 553.5h1M217 552.5h3M220 551.5h1M221 550.5h2M223 549.5h2M225 548.5h2M227 547.5h1M228 546.5h2M230 545.5h2M232 544.5h1M233 543.5h3M236 542.5h1M237 541.5h3M240 540.5h1M241 539.5h3M244 538.5h1M245 537.5h3M248 536.5h1M249 535.5h3M252 534.5h1M253 533.5h3M256 532.5h2M258 531.5h3M261 530.5h3M264 529.5h2M266 528.5h3M269 527.5h6M275 526.5h9M284 525.5h54M338 526.5h3M341 527.5h15M356 528.5h16M372 529.5h8M380 528.5h7M387 527.5h3M390 526.5h4M394 525.5h2M396 524.5h3M399 523.5h4M403 522.5h3M406 521.5h4M410 520.5h2M412 519.5h3M415 518.5h3M418 517.5h2M420 516.5h3M423 515.5h3M426 514.5h1M427 513.5h3M430 512.5h1M431 511.5h3M434 510.5h2M436 509.5h3M439 508.5h3M442 507.5h2M444 506.5h3M447 505.5h3M450 504.5h2M452 503.5h3M455 502.5h4M459 501.5h3M462 500.5h4M466 499.5h1M467 498.5h3M470 497.5h1M471 496.5h3M474 495.5h1M475 494.5h3M478 493.5h1M479 492.5h3M482 491.5h2M484 490.5h3M487 489.5h3M490 488.5h2M492 487.5h2M494 486.5h2M496 485.5h3M499 484.5h2M501 483.5h3M504 482.5h6M510 481.5h8M518 480.5h22M540 479.5h3M543 478.5h5M548 477.5h3M551 476.5h7M558 475.5h6M564 474.5h3M567 473.5h5M572 472.5h3M575 471.5h7M582 470.5h33M615 471.5h24M639 472.5h6M645 473.5h3M648 474.5h4M652 475.5h2M654 476.5h3M657 477.5h3M660 478.5h1M661 479.5h3M664 480.5h1M665 481.5h4M669 482.5h3M672 483.5h4M676 484.5h2M678 485.5h3M681 486.5h2M683 487.5h2M685 488.5h2M687 489.5h1M688 490.5h2M690 491.5h2M692 492.5h1M693 493.5h3M696 494.5h1M697 495.5h3M700 496.5h1M701 497.5h3M704 498.5h1M705 499.5h2M707 500.5h2M709 501.5h2M711 502.5h2M713 503.5h2M715 504.5h2M717 505.5h1M718 506.5h3M721 507.5h1M722 508.5h3M725 509.5h2M727 510.5h3M730 511.5h3M733 512.5h2M735 513.5h3M738 514.5h3M741 515.5h1M742 516.5h3M745 517.5h1M746 518.5h4M750 519.5h3M753 520.5h4M757 521.5h2M759 522.5h3M762 523.5h6M768 524.5h8M776 525.5h8M784 526.5h6M790 527.5h3M793 528.5h4M797 529.5h2M799 530.5h3M802 531.5h2" fill="none" stroke="#ff00ff" stroke-width="1"/>
<rect x="4" y="520" width="1" height="22" fill="#ff0000"/>
<rect x="12" y="517" width="1" height="25" fill="#ff0000"/>
<rect x="20" y="519" width="1" height="23" fill="#ff0000"/>
<rect x="28" y="532" width="1" height="10" fill="#ff0000"/>
<rect x="36" y="536" width="1" height="6" fill="#ff0000"/>
<rect x="44" y="541" width="1" height="8" fill="#00ff00"/>
<rect x="52" y="541" width="1" height="11" fill="#00ff00"/>
<rect x="61" y="541" width="1" height="18" fill="#00ff00"/>
<rect x="69" y="541" width="1" height="24" fill="#00ff00"/>
<rect x="77" y="541" width="1" height="31" fill="#00ff00"/>
<rect x="85" y="541" width="1" height="26" fill="#00ff00"/>
<rect x="93" y="541" width="1" height="13" fill="#00ff00"/>
<rect x="101" y="541" width="1" height="3" fill="#00ff00"/>
<rect x="109" y="541" width="1" height="5" fill="#00ff00"/>
<rect x="117" y="541" width="1" height="10" fill="#00ff00"/>
<rect x="125" y="541" width="1" height="14" fill="#00ff00"/>
<rect x="133" y="541" width="1" height="25" fill="#00ff00"/>
<rect x="141" y="541" width="1" height="24" fill="#00ff00"/>
<rect x="149" y="541" width="1" height="19" fill="#00ff00"/>
<rect x="157" y="541" width="1" height="19" fill="#00ff00"/>
<rect x="166" y="541" width="1" height="16" fill="#00ff00"/>
<rect x="174" y="541" width="1" height="11" fill="#00ff00"/>
<rect x="182" y="539" width="1" height="3" fill="#ff0000"/>
<rect x="190" y="522" width="1" height="20" fill="#ff0000"/>
<rect x="198" y="514" width="1" height="28" fill="#ff0000"/>
<rect x="206" y="506" width="1" height="36" fill="#ff0000"/>
<rect x="214" y="502" width="1" height="40" fill="#ff0000"/>
<rect x="222" y="503" width="1" height="39" fill="#ff0000"/>
<rect x="230" y="504" width="1" height="38" fill="#ff0000"/>
<rect x="238" y="506" width="1" height="36" fill="#ff0000"/>
<rect x="246" y="509" width="1" height="33" fill="#ff0000"/>
<rect x="254" y="511" width="1" height="31" fill="#ff0000"/>
<rect x="262" y="516" width="1" height="26" fill="#ff0000"/>
<rect x="270" y="522" width="1" height="20" fill="#ff0000"/>
<rect x="279" y="529" width="1" height="13" fill="#ff0000"/>
<rect x="287" y="534" width="1" height="8" fill="#ff0000"/>
<rect x="295" y="541" width="1" height="3" fill="#00ff00"/>
<rect x="303" y="541" width="1" height="1" fill="#ff0000"/>
<rect x="311" y="541" width="1" height="2" fill="#00ff00"/>
<rect x="319" y="541" width="1" height="1" fill="#ff0000"/>
<rect x="327" y="541" width="1" height="1" fill="#ff0000"/>
<rect x="335" y="541" width="1" height="4" fill="#00ff00"/>
<rect x="343" y="541" width="1" height="6" fill="#00ff00"/>
<rect x="351" y="541" width="1" height="6" fill="#00ff00"/>
<rect x="359" y="541" width="1" height="5" fill="#00ff00"/>
<rect x="367" y="541" width="1" height="4" fill="#00ff00"/>
<rect x="375" y="541" width="1" height="4" fill="#00ff00"/>
<rect x="384" y="536" width="1" height="6" fill="#ff0000"/>
<rect x="392" y="529" width="1" height="13" fill="#ff0000"/>
<rect x="400" y="522" width="1" height="20" fill="#ff0000"/>
<rect x="408" y="523" width="1" height="19" fill="#ff0000"/>
<rect x="416" y="519" width="1" height="23" fill="#ff0000"/>
<rect x="424" y="516" width="1" height="26" fill="#ff0000"/>
<rect x="432" y="518" width="1" height="24" fill="#ff0000"/>
<rect x="440" y="520" width="1" height="22" fill="#ff0000"/>
<rect x="448" y="520" width="1" height="22" fill="#ff0000"/>
<rect x="456" y="519" width="1" height="23" fill="#ff0000"/>
<rect x="464" y="522" width="1" height="20" fill="#ff0000"/>
<rect x="472" y="519" width="1" height="23" fill="#ff0000"/>
<rect x="480" y="517" width="1" height="25" fill="#ff0000"/>
<rect x="488" y="513" width="1" height="29" fill="#ff0000"/>
<rect x="497" y="507" width="1" height="35" fill="#ff0000"/>
<rect x="505" y="515" width="1" height="27" fill="#ff0000"/>
<rect x="513" y="529" width="1" height="13" fill="#ff0000"/>
<rect x="521" y="538" width="1" height="4" fill="#ff0000"/>
<rect x="529" y="538" width="1" height="4" fill="#ff0000"/>
<rect x="537" y="541" width="1" height="1" fill="#ff0000"/>
<rect x="545" y="532" width="1" height="10" fill="#ff0000"/>
<rect x="553" y="529" width="1" height="13" fill="#ff0000"/>
<rect x="561" y="529" width="1" height="13" fill="#ff0000"/>
<rect x="569" y="530" width="1" height="12" fill="#ff0000"/>
<rect x="577" y="531" width="1" height="11" fill="#ff0000"/>
<rect x="585" y="534" width="1" height="8" fill="#ff0000"/>
<rect x="593" y="536" width="1" height="6" fill="#ff0000"/>
<rect x="602" y="538" width="1" height="4" fill="#ff0000"/>
<rect x="610" y="541" width="1" height="1" fill="#ff0000"/>
<rect x="618" y="541" width="1" height="3" fill="#00ff00"/>
<rect x="626" y="541" width="1" height="3" fill="#00ff00"/>
<rect x="634" y="541" width="1" height="3" fill="#00ff00"/>
<rect x="642" y="541" width="1" height="9" fill="#00ff00"/>
<rect x="650" y="541" width="1" height="14" fill="#00ff00"/>
<rect x="658" y="541" width="1" height="24" fill="#00ff00"/>
<rect x="666" y="541" width="1" height="25" fill="#00ff00"/>
<rect x="674" y="541" width="1" height="25" fill="#00ff00"/>
<rect x="682" y="541" width="1" height="27" fill="#00ff00"/>
<rect x="690" y="541" width="1" height="35" fill="#00ff00"/>
<rect x="698" y="541" width="1" height="35" fill="#00ff00"/>
<rect x="706" y="541" width="1" height="35" fill="#00ff00"/>
<rect x="715" y="541" width="1" height="35" fill="#00ff00"/>
<rect x="723" y="541" width="1" height="35" fill="#00ff00"/>
<rect x="731" y="541" width="1" height="28" fill="#00ff00"/>
<rect x="739" y="541" width="1" height="25" fill="#00ff00"/>
<rect x="747" y="541" width="1" height="25" fill="#00ff00"/>
<rect x="755" y="541" width="1" height="23" fill="#00ff00"/>
<rect x="763" y="541" width="1" height="20" fill="#00ff00"/>
<rect x="771" y="541" width="1" height="11" fill="#00ff00"/>
<rect x="779" y="541" width="1" height="3" fill="#00ff00"/>
<rect x="787" y="541" width="1" height="9" fill="#00ff00"/>
<rect x="795" y="541" width="1" height="18" fill="#00ff00"/>
<rect x="803" y="541" width="1" height="26" fill="#00ff00"/>
<path d="M4 645.5h1M5 646.5h1M6 647.5h1M7 648.5h1M8 649.5h2M10 650.5h1M11 651.5h1M12 652.5h1M13 653.5h1M14.5 654v2M15 656.5h1M16 657.5h1M17 658.5h1M18.5 659v2M19 661.5h1M20.5 662v2M21.5 664v2M22.5 666v3M23.5 669v2M24.5 671v3M25.5 674v2M26.5 676v3M27.5 679v2M28.5 681v2M29 681.5h1M30 680.5h1M31 679.5h1M32 678.5h2M34 677.5h1M35 676.5h1M36.5 675v2M37.5 677v2M38.5 679v2M39.5 681v2M40.5 683v3M41.5 686v2M42.5 688v2M43.5 690v2M44.5 692v2M44 692.5h1M45.5 690v2M46.5 688v2M47.5 685v3M48.5 683v2M49.5 680v3M50.5 678v2M51.5 676v2M52.5 674v2M53 675.5h1M54 676.5h2M56 677.5h1M57 678.5h1M58 679.5h2M60 680.5h1M61 681.5h2M63 680.5h2M65 679.5h3M68 678.5h2M70 679.5h1M71 680.5h2M73 681.5h1M74 682.5h2M76 683.5h1M77.5 683v2M78.5 680v3M79.5 677v3M80.5 674v3M81.5 670v4M82.5 667v3M83.5 664v3M84.5 661v3M85.5 659v2M86.5 657v2M87.5 655v2M88 654.5h1M89.5 652v2M90 651.5h1M91.5 649v2M92.5 647v2M93 646.5h1M94 645.5h2M96 644.5h2M98 643.5h1M99 642.5h2M101.5 641v2M102.5 643v3M103.5 646v4M104.5 650v3M105.5 653v3M106.5 656v3M107.5 659v4M108.5 663v3M109.5 666v2M110.5 668v2M111 670.5h1M112 671.5h1M113.5 672v2M114 674.5h1M115 675.5h1M116.5 676v2M117 678.5h3M120 679.5h3M123 680.5h3M126.5 681v2M127.5 683v2M128.5 685v2M129.5 687v2M130.5 689v2M131.5 691v2M132.5 693v2M133.5 694v2M134.5 692v2M135.5 690v2M136.5 687v3M137.5 685v2M138.5 682v3M139.5 680v2M140.5 678v2M141.5 676v2M142.5 674v2M143.5 672v2M144.5 670v2M145.5 668v2M146.5 666v2M147.5 664v2M148.5 662v2M149 661.5h1M150 662.5h1M151 663.5h1M152 664.5h1M153 665.5h1M154 666.5h1M155 667.5h1M156 668.5h1M157 669.5h1M158 668.5h1M159 667.5h2M161 666.5h1M162 665.5h1M163 664.5h2M165 663.5h1M166 662.5h2M168 661.5h2M170 660.5h3M173 659.5h2M174 658.5h1M175.5 656v2M176.5 653v3M177.5 650v3M178.5 648v2M179.5 645v3M180.5 642v3M181.5 640v2M182.5 638v2M183 637.5h1M184 636.5h2M186 635.5h1M187 634.5h2M189 633.5h1M190 632.5h1M191 633.5h1M192.5 634v2M193 636.5h1M194 637.5h1M195 638.5h1M196.5 639v2M197 641.5h1M198 642.5h9M207 643.5h2M209 644.5h2M211 645.5h1M212 646.5h2M214 647.5h1M215.5 648v2M216.5 650v2M217.5 652v2M218.5 654v2M219.5 656v2M220.5 658v2M221.5 660v2M222 662.5h2M224 661.5h2M226 660.5h3M229 659.5h6M235 660.5h6M241 661.5h3M244 662.5h4M248 661.5h2M250 660.5h3M253 659.5h3M256 660.5h2M258 661.5h3M261 662.5h3M264 663.5h2M266 664.5h3M269 665.5h2M271 666.5h2M273 667.5h1M274 668.5h2M276 669.5h1M277 670.5h2M279 671.5h9M288.5 672v2M289 674.5h1M290.5 675v2M291 677.5h1M292.5 678v2M293 680.5h1M294.5 681v2M295.5 682v2M296.5 679v3M297.5 676v3M298.5 673v3M299.5 669v4M300.5 666v3M301.5 663v3M302.5 660v3M303.5 658v2M304 658.5h1M305 659.5h1M306 660.5h3M309 661.5h1M310 662.5h2M312 661.5h1M313 660.5h2M315 659.5h1M316 658.5h2M318 657.5h1M319 656.5h2M321 657.5h2M323 658.5h3M326 659.5h2M328 660.5h1M329 661.5h1M330 662.5h1M331 663.5h1M332 664.5h1M333 665.5h1M334 666.5h1M335 667.5h2M337 668.5h2M339 669.5h3M342 670.5h2M344 669.5h2M346 668.5h2M348 667.5h1M349 666.5h2M351 665.5h2M353 664.5h2M355 663.5h3M358 662.5h6M364 661.5h8M372 662.5h4M375 661.5h1M376.5 659v2M377.5 657v2M378.5 655v2M379.5 653v2M380.5 651v2M381.5 649v2M382.5 647v2M383.5 645v2M384.5 643v2M385 643.5h12M397 642.5h4M400 643.5h1M401 644.5h1M402.5 645v3M403 648.5h1M404.5 649v3M405 652.5h1M406.5 653v3M407 656.5h1M408.5 657v2M409 657.5h1M410 656.5h1M411 655.5h1M412.5 653v2M413 652.5h1M414 651.5h1M415 650.5h1M416 649.5h5M421 650.5h4M425 651.5h1M426 652.5h1M427 653.5h1M428.5 654v2M429 656.5h1M430 657.5h1M431 658.5h1M432 659.5h9M441 658.5h2M443 657.5h2M445 656.5h1M446 655.5h2M448 654.5h5M453 653.5h4M457 654.5h1M458 655.5h2M460 656.5h1M461 657.5h2M463 658.5h1M464 659.5h1M465.5 657v2M466 656.5h1M467.5 654v2M468 653.5h1M469.5 651v2M470 650.5h1M471.5 648v2M472 647.5h5M477 648.5h4M481 647.5h1M482 646.5h1M483 645.5h1M484 644.5h2M486 643.5h1M487 642.5h1M488 641.5h10M497 642.5h1M498.5 643v2M499.5 645v3M500.5 648v2M501.5 650v3M502.5 653v2M503.5 655v3M504.5 658v2M505.5 660v3M506.5 663v2M507.5 665v2M508.5 667v3M509.5 670v2M510.5 672v3M511.5 675v2M512.5 677v2M513.5 679v2M514 679.5h1M515 678.5h1M516 677.5h1M517 676.5h2M519 675.5h1M520 674.5h1M521 673.5h1M522.5 671v2M523.5 669v2M524 668.5h1M525.5 666v2M526 665.5h1M527.5 663v2M528.5 661v2M529 660.5h3M532 661.5h3M535 662.5h3M537 661.5h1M538.5 658v3M539.5 655v3M540.5 652v3M541.5 649v3M542.5 646v3M543.5 643v3M544.5 640v3M545.5 638v2M546 639.5h2M548 640.5h2M550 641.5h1M551 642.5h2M553 643.5h1M554 644.5h1M555 645.5h1M556 646.5h1M557 647.5h1M558 648.5h1M559 649.5h1M560 650.5h1M561 651.5h2M563 652.5h1M564 653.5h3M567 654.5h1M568 655.5h6M574 656.5h4M578 657.5h1M579 658.5h2M581 659.5h1M582 660.5h2M584 661.5h1M585 662.5h3M588 661.5h3M591 660.5h7M598 659.5h9M607 660.5h6M613 661.5h3M616 662.5h3M619 661.5h1M620 660.5h2M622 659.5h1M623 658.5h2M625 657.5h1M626 656.5h9M635.5 657v2M636 659.5h1M637 660.5h1M638.5 661v2M639 663.5h1M640 664.5h1M641.5 665v2M642 667.5h2M644 668.5h2M646 669.5h3M649 670.5h2M651.5 671v2M652 673.5h1M653 674.5h1M654.5 675v2M655 677.5h1M656 678.5h1M657.5 679v2M658 681.5h1M659.5 679v2M660.5 677v2M661.5 675v2M662 674.5h1M663.5 672v2M664.5 670v2M665.5 668v2M666 667.5h2M668 666.5h2M670 665.5h3M673 664.5h4M677 665.5h3M680 666.5h3M683.5 667v2M684 669.5h1M685.5 670v2M686 672.5h1M687.5 673v2M688 675.5h1M689.5 676v2M690 678.5h1M691 677.5h1M692 676.5h1M693 675.5h1M694.5 673v2M695 672.5h1M696 671.5h1M697 670.5h1M698 669.5h20M718 668.5h3M721 667.5h3M724.5 665v2M725 664.5h1M726 663.5h1M727.5 661v2M728 660.5h1M729 659.5h1M730.5 657v2M731 656.5h1M732 657.5h2M734 658.5h2M736 659.5h1M737 660.5h2M739 661.5h1M740 662.5h1M741 663.5h2M743 664.5h1M744 665.5h2M746 666.5h1M747 667.5h2M749 666.5h2M751 665.5h3M754 664.5h10M764.5 662v2M765.5 660v2M766.5 658v2M767 657.5h1M768.5 655v2M769.5 653v2M770.5 651v2M771 650.5h9M779 651.5h1M780.5 652v2M781.5 654v2M782.5 656v2M783.5 658v3M784.5 661v2M785.5 663v2M786.5 665v2M787.5 667v2M788.5 669v2M789.5 671v2M790.5 673v2M791.5 675v2M792.5 677v2M793.5 679v2M794.5 681v2M795 683.5h2M797 684.5h1M798 685.5h3M801 686.5h1M802 687.5h2" fill="none" stroke="#ffffff" stroke-width="1"/>
<path d="M4 635.5h1M5 636.5h1M6 637.5h1M7 638.5h1M8 639.5h2M10 640.5h1M11 641.5h1M12 642.5h1M13 643.5h1M14 644.5h1M15 645.5h1M16.5 646v2M17 648.5h1M18 649.5h1M19 650.5h1M20.5 651v2M21.5 653v2M22.5 655v3M23.5 658v3M24.5 661v2M25.5 663v3M26.5 666v3M27.5 669v2M28.5 671v2M29 671.5h2M31 670.5h2M33 669.5h1M34 668.5h2M36.5 667v2M37.5 669v3M38.5 672v3M39.5 675v3M40.5 678v4M41.5 682v3M42.5 685v3M43.5 688v3M44.5 691v2M44 691.5h1M45.5 689v2M46.5 687v2M47.5 685v2M48.5 682v3M49.5 680v2M50.5 678v2M51.5 676v2M52.5 674v2M53.5 675v2M54.5 677v2M55.5 679v2M56.5 681v2M57 683.5h1M58.5 684v2M59.5 686v2M60.5 688v2M61 690.5h3M64 691.5h3M67 692.5h3M70 693.5h1M71.5 694v2M72 696.5h1M73 697.5h1M74 698.5h1M75.5 699v2M76 701.5h1M77.5 701v2M78.5 698v3M79.5 695v3M80.5 692v3M81.5 690v2M82.5 687v3M83.5 684v3M84.5 681v3M85.5 678v3M86.5 676v2M87.5 674v2M88.5 672v2M89.5 669v3M90.5 667v2M91.5 665v2M92.5 663v2M93.5 661v2M94 660.5h1M95.5 658v2M96 657.5h1M97 656.5h1M98 655.5h1M99.5 653v2M100 652.5h1M101.5 651v2M102.5 653v2M103.5 655v3M104.5 658v3M105.5 661v2M106.5 663v3M107.5 666v3M108.5 669v2M109.5 671v2M110 673.5h1M111 674.5h1M112 675.5h1M113 676.5h2M115 677.5h1M116 678.5h1M117 679.5h5M122 680.5h4M126.5 681v2M127.5 683v2M128.5 685v2M129.5 687v2M130.5 689v2M131.5 691v2M132.5 693v2M133 695.5h1M134.5 693v2M135.5 691v2M136 690.5h1M137.5 688v2M138 687.5h1M139.5 685v2M140.5 683v2M141 682.5h1M142.5 680v2M143 679.5h1M144.5 677v2M145 676.5h1M146.5 674v2M147 673.5h1M148.5 671v2M149 670.5h1M150.5 671v2M151 673.5h1M152 674.5h1M153.5 675v2M154 677.5h1M155 678.5h1M156.5 679v2M157 681.5h1M158 680.5h2M160 679.5h1M161 678.5h2M163 677.5h1M164 676.5h2M166 675.5h2M168 674.5h2M170 673.5h3M173 672.5h2M174 671.5h1M175.5 668v3M176.5 665v3M177.5 662v3M178.5 659v3M179.5 656v3M180.5 653v3M181.5 650v3M182.5 648v2M183.5 646v2M184.5 644v2M185.5 642v2M186.5 640v2M187.5 638v2M188.5 636v2M189.5 634v2M190 633.5h3M193 634.5h3M196 635.5h3M199 634.5h1M200 633.5h1M201 632.5h1M202 631.5h2M204 630.5h1M205 629.5h1M206 628.5h5M211 629.5h4M215 630.5h1M216.5 631v2M217 633.5h1M218 634.5h1M219 635.5h1M220.5 636v2M221 638.5h1M222 639.5h10M232 640.5h2M234 641.5h3M237 642.5h3M240 643.5h1M241 644.5h3M244 645.5h1M245 646.5h6M251 647.5h4M255 648.5h1M256 649.5h1M257 650.5h1M258 651.5h2M260 652.5h1M261 653.5h1M262 654.5h1M263 655.5h1M264 656.5h2M266 657.5h1M267 658.5h2M269 659.5h1M270 660.5h1M271 661.5h1M272 662.5h2M274 663.5h1M275 664.5h1M276 665.5h2M278 666.5h1M279 667.5h3M282 668.5h3M285 669.5h3M288.5 670v2M289.5 672v2M290.5 674v2M291.5 676v2M292.5 678v2M293.5 680v2M294.5 682v2M295.5 683v2M296.5 680v3M297.5 677v3M298.5 674v3M299.5 671v3M300.5 668v3M301.5 665v3M302.5 662v3M303.5 660v2M304 661.5h1M305 662.5h2M307 663.5h1M308 664.5h2M310 665.5h1M311 666.5h1M312 665.5h1M313 664.5h2M315 663.5h1M316 662.5h2M318 661.5h1M319 660.5h2M321 661.5h2M323 662.5h3M326 663.5h2M328 664.5h1M329 665.5h2M331 666.5h1M332 667.5h2M334 668.5h1M335 669.5h9M344 668.5h2M346 667.5h2M348 666.5h1M349 665.5h2M351 664.5h3M354 663.5h3M357 662.5h5M362 661.5h3M365 660.5h5M370 661.5h3M373 662.5h3M375 661.5h1M376.5 659v2M377.5 657v2M378.5 654v3M379.5 652v2M380.5 650v2M381.5 647v3M382.5 645v2M383.5 643v2M384.5 641v2M385 641.5h1M386 640.5h2M388 639.5h3M391 638.5h2M393 637.5h2M395 636.5h2M397 635.5h1M398 634.5h2M400 633.5h1M401.5 634v2M402.5 636v2M403.5 638v2M404.5 640v2M405.5 642v2M406.5 644v2M407.5 646v2M408 648.5h1M409.5 646v2M410 645.5h1M411.5 643v2M412 642.5h1M413.5 640v2M414 639.5h1M415.5 637v2M416 636.5h2M418 635.5h1M419 634.5h3M422 633.5h1M423 632.5h2M425.5 633v2M426 635.5h1M427 636.5h1M428.5 637v2M429 639.5h1M430 640.5h1M431.5 641v2M432 643.5h3M435 644.5h3M438 645.5h4M442 644.5h1M443 643.5h3M446 642.5h1M447 641.5h4M451 640.5h3M454 639.5h3M457 640.5h1M458 641.5h1M459 642.5h1M460 643.5h1M461 644.5h1M462 645.5h1M463 646.5h1M464 647.5h1M465 646.5h1M466 645.5h1M467 644.5h1M468.5 642v2M469 641.5h1M470 640.5h1M471 639.5h1M472 638.5h5M477 637.5h4M481 636.5h1M482.5 634v2M483 633.5h1M484 632.5h1M485 631.5h1M486.5 629v2M487 628.5h1M488 627.5h3M491 626.5h4M495 625.5h3M497 626.5h1M498.5 627v2M499.5 629v3M500.5 632v3M501.5 635v2M502.5 637v3M503.5 640v3M504.5 643v2M505.5 645v3M506.5 648v2M507.5 650v2M508.5 652v3M509.5 655v2M510.5 657v3M511.5 660v2M512.5 662v2M513.5 664v2M514 664.5h2M516 663.5h2M518 662.5h1M519 661.5h2M521 660.5h1M522 659.5h1M523.5 657v2M524 656.5h1M525 655.5h1M526 654.5h1M527.5 652v2M528 651.5h1M529 650.5h1M530 651.5h1M531 652.5h2M533 653.5h1M534 654.5h2M536 655.5h1M537.5 655v2M538.5 652v3M539.5 650v2M540.5 647v3M541.5 644v3M542.5 641v3M543.5 639v2M544.5 636v3M545.5 634v2M546 634.5h1M547 635.5h1M548 636.5h3M551 637.5h1M552 638.5h2M554 639.5h2M556 640.5h2M558 641.5h1M559 642.5h2M561 643.5h3M564 644.5h3M567 645.5h7M574 644.5h5M579 645.5h2M581 646.5h3M584 647.5h6M590 646.5h13M603 647.5h2M605 648.5h2M607 649.5h1M608 650.5h2M610 651.5h2M612 652.5h1M613 653.5h3M616 654.5h1M617 655.5h2M619 654.5h2M621 653.5h2M623 652.5h1M624 651.5h2M626 650.5h5M631 651.5h4M635.5 652v2M636 654.5h1M637.5 655v2M638 657.5h1M639.5 658v2M640 660.5h1M641.5 661v2M642 663.5h2M644 664.5h1M645 665.5h3M648 666.5h1M649 667.5h2M651.5 668v2M652.5 670v2M653 672.5h1M654.5 673v2M655 675.5h1M656.5 676v2M657.5 678v2M658 680.5h1M659.5 678v2M660 677.5h1M661.5 675v2M662 674.5h1M663.5 672v2M664 671.5h1M665.5 669v2M666 668.5h3M669 667.5h3M672 666.5h3M675 667.5h2M677 668.5h2M679 669.5h1M680 670.5h2M682 671.5h1M683.5 672v2M684.5 674v2M685.5 676v2M686 678.5h1M687.5 679v2M688.5 681v2M689.5 683v2M690 685.5h1M691 684.5h1M692.5 682v2M693 681.5h1M694 680.5h1M695 679.5h1M696.5 677v2M697 676.5h1M698 675.5h22M720 674.5h4M724.5 672v2M725 671.5h1M726 670.5h1M727.5 668v2M728 667.5h1M729 666.5h1M730.5 664v2M731 663.5h5M736 664.5h4M740 665.5h2M742 666.5h2M744 667.5h1M745 668.5h2M747 669.5h3M750 668.5h3M753 667.5h5M758 666.5h3M761 665.5h3M763 664.5h1M764.5 662v2M765.5 660v2M766.5 658v2M767.5 656v2M768.5 654v2M769.5 652v2M770.5 650v2M771.5 648v2M772 648.5h4M776 647.5h4M779 648.5h1M780.5 649v2M781.5 651v3M782.5 654v2M783.5 656v3M784.5 659v2M785.5 661v3M786.5 664v2M787.5 666v3M788 669.5h1M789.5 670v3M790 673.5h1M791.5 674v3M792 677.5h1M793.5 678v3M794 681.5h1M795.5 682v2M796 683.5h1M797 684.5h1M798 685.5h3M801 686.5h1M802 687.5h2" fill="none" stroke="#ff00ff" stroke-width="1"/>
<path d="M4 635.5h2M6 636.5h2M8 637.5h3M11 638.5h2M13 639.5h1M14 640.5h2M16 641.5h1M17 642.5h2M19 643.5h1M20.5 644v2M21.5 646v2M22.5 648v3M23.5 651v3M24.5 654v2M25.5 656v3M26.5 659v3M27.5 662v2M28.5 664v2M29 664.5h1M30 663.5h2M32 662.5h1M33 661.5h2M35 660.5h1M36.5 659v2M37.5 661v3M38.5 664v3M39.5 667v3M40.5 670v4M41.5 674v3M42.5 677v3M43.5 680v3M44.5 683v2M45.5 682v2M46.5 680v2M47.5 678v2M48.5 676v2M49.5 674v2M50.5 672v2M51.5 670v2M52 669.5h1M53.5 670v2M54.5 672v2M55 674.5h1M56.5 675v2M57.5 677v2M58 679.5h1M59.5 680v2M60.5 682v2M61 684.5h2M63 685.5h1M64 686.5h3M67 687.5h1M68 688.5h2M70.5 689v2M71 691.5h1M72 692.5h1M73.5 693v2M74 695.5h1M75 696.5h1M76.5 697v2M77.5 698v2M78.5 696v2M79.5 694v2M80.5 692v2M81.5 689v3M82.5 687v2M83.5 685v2M84.5 683v2M85.5 680v3M86.5 678v2M87.5 676v2M88.5 674v2M89.5 671v3M90.5 669v2M91.5 667v2M92.5 665v2M93.5 663v2M94 662.5h1M95 661.5h1M96 660.5h1M97.5 658v2M98 657.5h1M99 656.5h1M100 655.5h1M101.5 654v2M102.5 656v3M103.5 659v3M104.5 662v3M105.5 665v3M106.5 668v3M107.5 671v3M108.5 674v3M109.5 677v2M110 679.5h1M111.5 680v2M112 682.5h1M113 683.5h1M114 684.5h1M115.5 685v2M116 687.5h1M117 688.5h2M119 689.5h1M120 690.5h3M123 691.5h1M124 692.5h2M125 693.5h1M126.5 694v2M127.5 696v2M128.5 698v2M129.5 700v2M130.5 702v2M131.5 704v2M132.5 706v2M133.5 708v2M134.5 707v2M135.5 705v2M136 704.5h1M137.5 702v2M138 701.5h1M139.5 699v2M140.5 697v2M141 696.5h1M142 695.5h1M143 694.5h1M144 693.5h1M145.5 691v2M146 690.5h1M147 689.5h1M148 688.5h1M149 687.5h1M150.5 688v2M151 690.5h1M152 691.5h1M153.5 692v2M154 694.5h1M155 695.5h1M156.5 696v2M157 698.5h1M158 697.5h1M159 696.5h2M161 695.5h1M162 694.5h1M163 693.5h2M165 692.5h1M166 691.5h1M167 690.5h2M169 689.5h2M171 688.5h1M172 687.5h2M174.5 685v2M175.5 681v4M176.5 678v3M177.5 675v3M178.5 671v4M179.5 668v3M180.5 665v3M181.5 661v4M182.5 658v3M183.5 656v2M184.5 654v2M185.5 652v2M186.5 650v2M187.5 648v2M188.5 646v2M189.5 644v2M190.5 642v2M191 642.5h1M192 643.5h1M193 644.5h3M196 645.5h1M197 646.5h2M199.5 644v2M200 643.5h1M201 642.5h1M202.5 640v2M203 639.5h1M204 638.5h1M205.5 636v2M206 635.5h3M209 634.5h3M212 633.5h3M215 634.5h1M216 635.5h2M218 636.5h1M219 637.5h2M221 638.5h1M222 639.5h1M223 638.5h2M225 637.5h2M227 636.5h1M228 635.5h2M230 634.5h3M233 635.5h3M236 636.5h12M248 635.5h2M250 634.5h3M253 633.5h2M255 634.5h2M257 635.5h2M259 636.5h1M260 637.5h2M262 638.5h2M264 639.5h1M265 640.5h3M268 641.5h1M269 642.5h2M271 643.5h2M273 644.5h1M274 645.5h2M276 646.5h1M277 647.5h2M279 648.5h2M281 649.5h2M283 650.5h3M286 651.5h2M288.5 652v2M289.5 654v2M290.5 656v2M291 658.5h1M292.5 659v2M293.5 661v2M294.5 663v2M295.5 664v2M296.5 661v3M297.5 659v2M298.5 656v3M299.5 653v3M300.5 650v3M301.5 648v2M302.5 645v3M303.5 643v2M304 644.5h1M305 645.5h1M306 646.5h1M307 647.5h1M308 648.5h1M309 649.5h1M310 650.5h1M311 651.5h1M312 650.5h2M314 649.5h2M316 648.5h1M317 647.5h2M319 646.5h1M320 647.5h1M321 648.5h2M323 649.5h1M324 650.5h2M326 651.5h1M327 652.5h1M328 653.5h1M329 654.5h1M330 655.5h1M331 656.5h1M332 657.5h1M333 658.5h1M334 659.5h1M335 660.5h2M337 661.5h2M339 662.5h3M342 663.5h4M346 662.5h3M349 661.5h15M364 662.5h6M370 663.5h3M373 664.5h3M375 663.5h1M376.5 661v2M377.5 658v3M378.5 655v3M379.5 652v3M380.5 650v2M381.5 647v3M382.5 645v2M383.5 642v3M384.5 640v2M385 640.5h1M386 639.5h1M387 638.5h3M390 637.5h1M391 636.5h2M393 635.5h2M395 634.5h2M397 633.5h1M398 632.5h2M400 631.5h1M401.5 632v2M402.5 634v2M403.5 636v2M404 638.5h1M405.5 639v2M406.5 641v2M407.5 643v2M408 645.5h1M409.5 643v2M410.5 641v2M411.5 639v2M412.5 637v2M413.5 635v2M414.5 633v2M415.5 631v2M416 630.5h1M417 629.5h2M419 628.5h2M421 627.5h1M422 626.5h2M424 625.5h1M425 626.5h1M426 627.5h1M427 628.5h1M428 629.5h1M429 630.5h1M430 631.5h1M431 632.5h1M432 633.5h5M437 632.5h4M441 631.5h1M442 630.5h2M444 629.5h1M445 628.5h2M447 627.5h1M448 626.5h2M450 625.5h1M451 624.5h3M454 623.5h1M455 622.5h2M457 623.5h1M458 624.5h2M460 625.5h1M461 626.5h2M463 627.5h1M464 628.5h1M465.5 626v2M466.5 624v2M467 623.5h1M468.5 621v2M469 620.5h1M470.5 618v2M471.5 616v2M472 615.5h3M475 614.5h3M478 613.5h3M481 612.5h1M482.5 610v2M483 609.5h1M484 608.5h1M485 607.5h1M486.5 605v2M487 604.5h1M488 603.5h2M490 602.5h2M492 601.5h2M494 600.5h2M496 599.5h2M497 600.5h1M498.5 601v2M499.5 603v3M500.5 606v3M501.5 609v2M502.5 611v3M503.5 614v3M504.5 617v2M505.5 619v3M506.5 622v2M507.5 624v2M508.5 626v3M509.5 629v2M510.5 631v3M511.5 634v2M512.5 636v2M513.5 638v2M514 639.5h1M515 638.5h2M517 637.5h3M520 636.5h2M522.5 634v2M523 633.5h1M524 632.5h1M525.5 630v2M526 629.5h1M527 628.5h1M528.5 626v2M529 625.5h1M530 626.5h1M531 627.5h1M532 628.5h1M533 629.5h2M535 630.5h1M536 631.5h1M537.5 631v2M538.5 628v3M539.5 625v3M540.5 622v3M541.5 620v2M542.5 617v3M543.5 614v3M544.5 611v3M545.5 609v2M546 609.5h1M547 610.5h1M548 611.5h3M551 612.5h1M552 613.5h2M554 614.5h1M555 615.5h2M557 616.5h1M558 617.5h2M560 618.5h1M561 619.5h2M563 620.5h2M565 621.5h3M568 622.5h11M579 623.5h1M580 624.5h3M583 625.5h1M584 626.5h6M590 627.5h8M598 628.5h6M604 629.5h1M605 630.5h3M608 631.5h1M609 632.5h3M612 633.5h2M614 634.5h3M617 635.5h2M619 634.5h2M621 633.5h2M623 632.5h1M624 631.5h2M626 630.5h9M635.5 631v2M636.5 633v2M637.5 635v2M638.5 637v2M639.5 639v2M640.5 641v2M641.5 643v2M642 645.5h2M644 646.5h1M645 647.5h3M648 648.5h1M649 649.5h2M650 650.5h1M651.5 651v2M652.5 653v2M653.5 655v2M654.5 657v2M655.5 659v2M656.5 661v2M657.5 663v2M658.5 665v2M659 665.5h1M660.5 663v2M661 662.5h1M662 661.5h1M663 660.5h1M664.5 658v2M665 657.5h1M666 656.5h5M671 655.5h4M675 656.5h2M677 657.5h2M679 658.5h1M680 659.5h2M682.5 660v2M683.5 662v2M684.5 664v2M685.5 666v2M686.5 668v3M687.5 671v2M688.5 673v2M689.5 675v2M690.5 677v2M691 677.5h1M692 676.5h1M693 675.5h1M694 674.5h2M696 673.5h1M697 672.5h1M698 671.5h5M703 672.5h5M708 673.5h3M711 674.5h3M714 675.5h3M717 676.5h2M719 677.5h3M722 678.5h2M724 677.5h1M725.5 675v2M726 674.5h1M727 673.5h1M728 672.5h1M729.5 670v2M730 669.5h1M731 668.5h2M733 669.5h2M735 670.5h3M738 671.5h2M740 672.5h1M741 673.5h1M742 674.5h1M743 675.5h2M745 676.5h1M746 677.5h1M747 678.5h2M749 677.5h1M750 676.5h3M753 675.5h1M754 674.5h6M760 673.5h4M763 672.5h1M764.5 670v2M765.5 668v2M766.5 666v2M767.5 663v3M768.5 661v2M769.5 659v2M770.5 657v2M771.5 655v2M772 655.5h2M774 654.5h3M777 653.5h3M779 654.5h1M780.5 655v2M781.5 657v3M782.5 660v3M783.5 663v2M784.5 665v3M785.5 668v3M786.5 671v2M787.5 673v2M788.5 675v2M789.5 677v2M790.5 679v2M791 681.5h1M792.5 682v2M793.5 684v2M794.5 686v2M795 688.5h2M797 689.5h1M798 690.5h3M801 691.5h1M802 692.5h2" fill="none" stroke="#00ff00" stroke-width="1"/>
</svg>
<div class="t sg" style="left:39px;top:283px;color:#00f400">平多</div>
<div class="t sg" style="left:64px;top:328px;color:#00f400">空</div>
<div class="t sg" style="left:201px;top:266px;color:#ff0000">多</div>
<div class="t sg" style="left:191px;top:362px;color:#ff0000">平空</div>
<div class="t sg" style="left:693px;top:104px;color:#00f400">平多</div>
<div class="t sg" style="left:766px;top:167px;color:#ff0000">多</div>
<div class="t sg" style="left:790px;top:97px;color:#00f400">平多</div>
<div class="t ya" style="left:657px;top:80px;color:#fff;font-size:12.3px">41.47</div>
<div class="t ya" style="left:157px;top:416px;color:#fff;font-size:12.3px">39.28</div>
</div></body></html>
